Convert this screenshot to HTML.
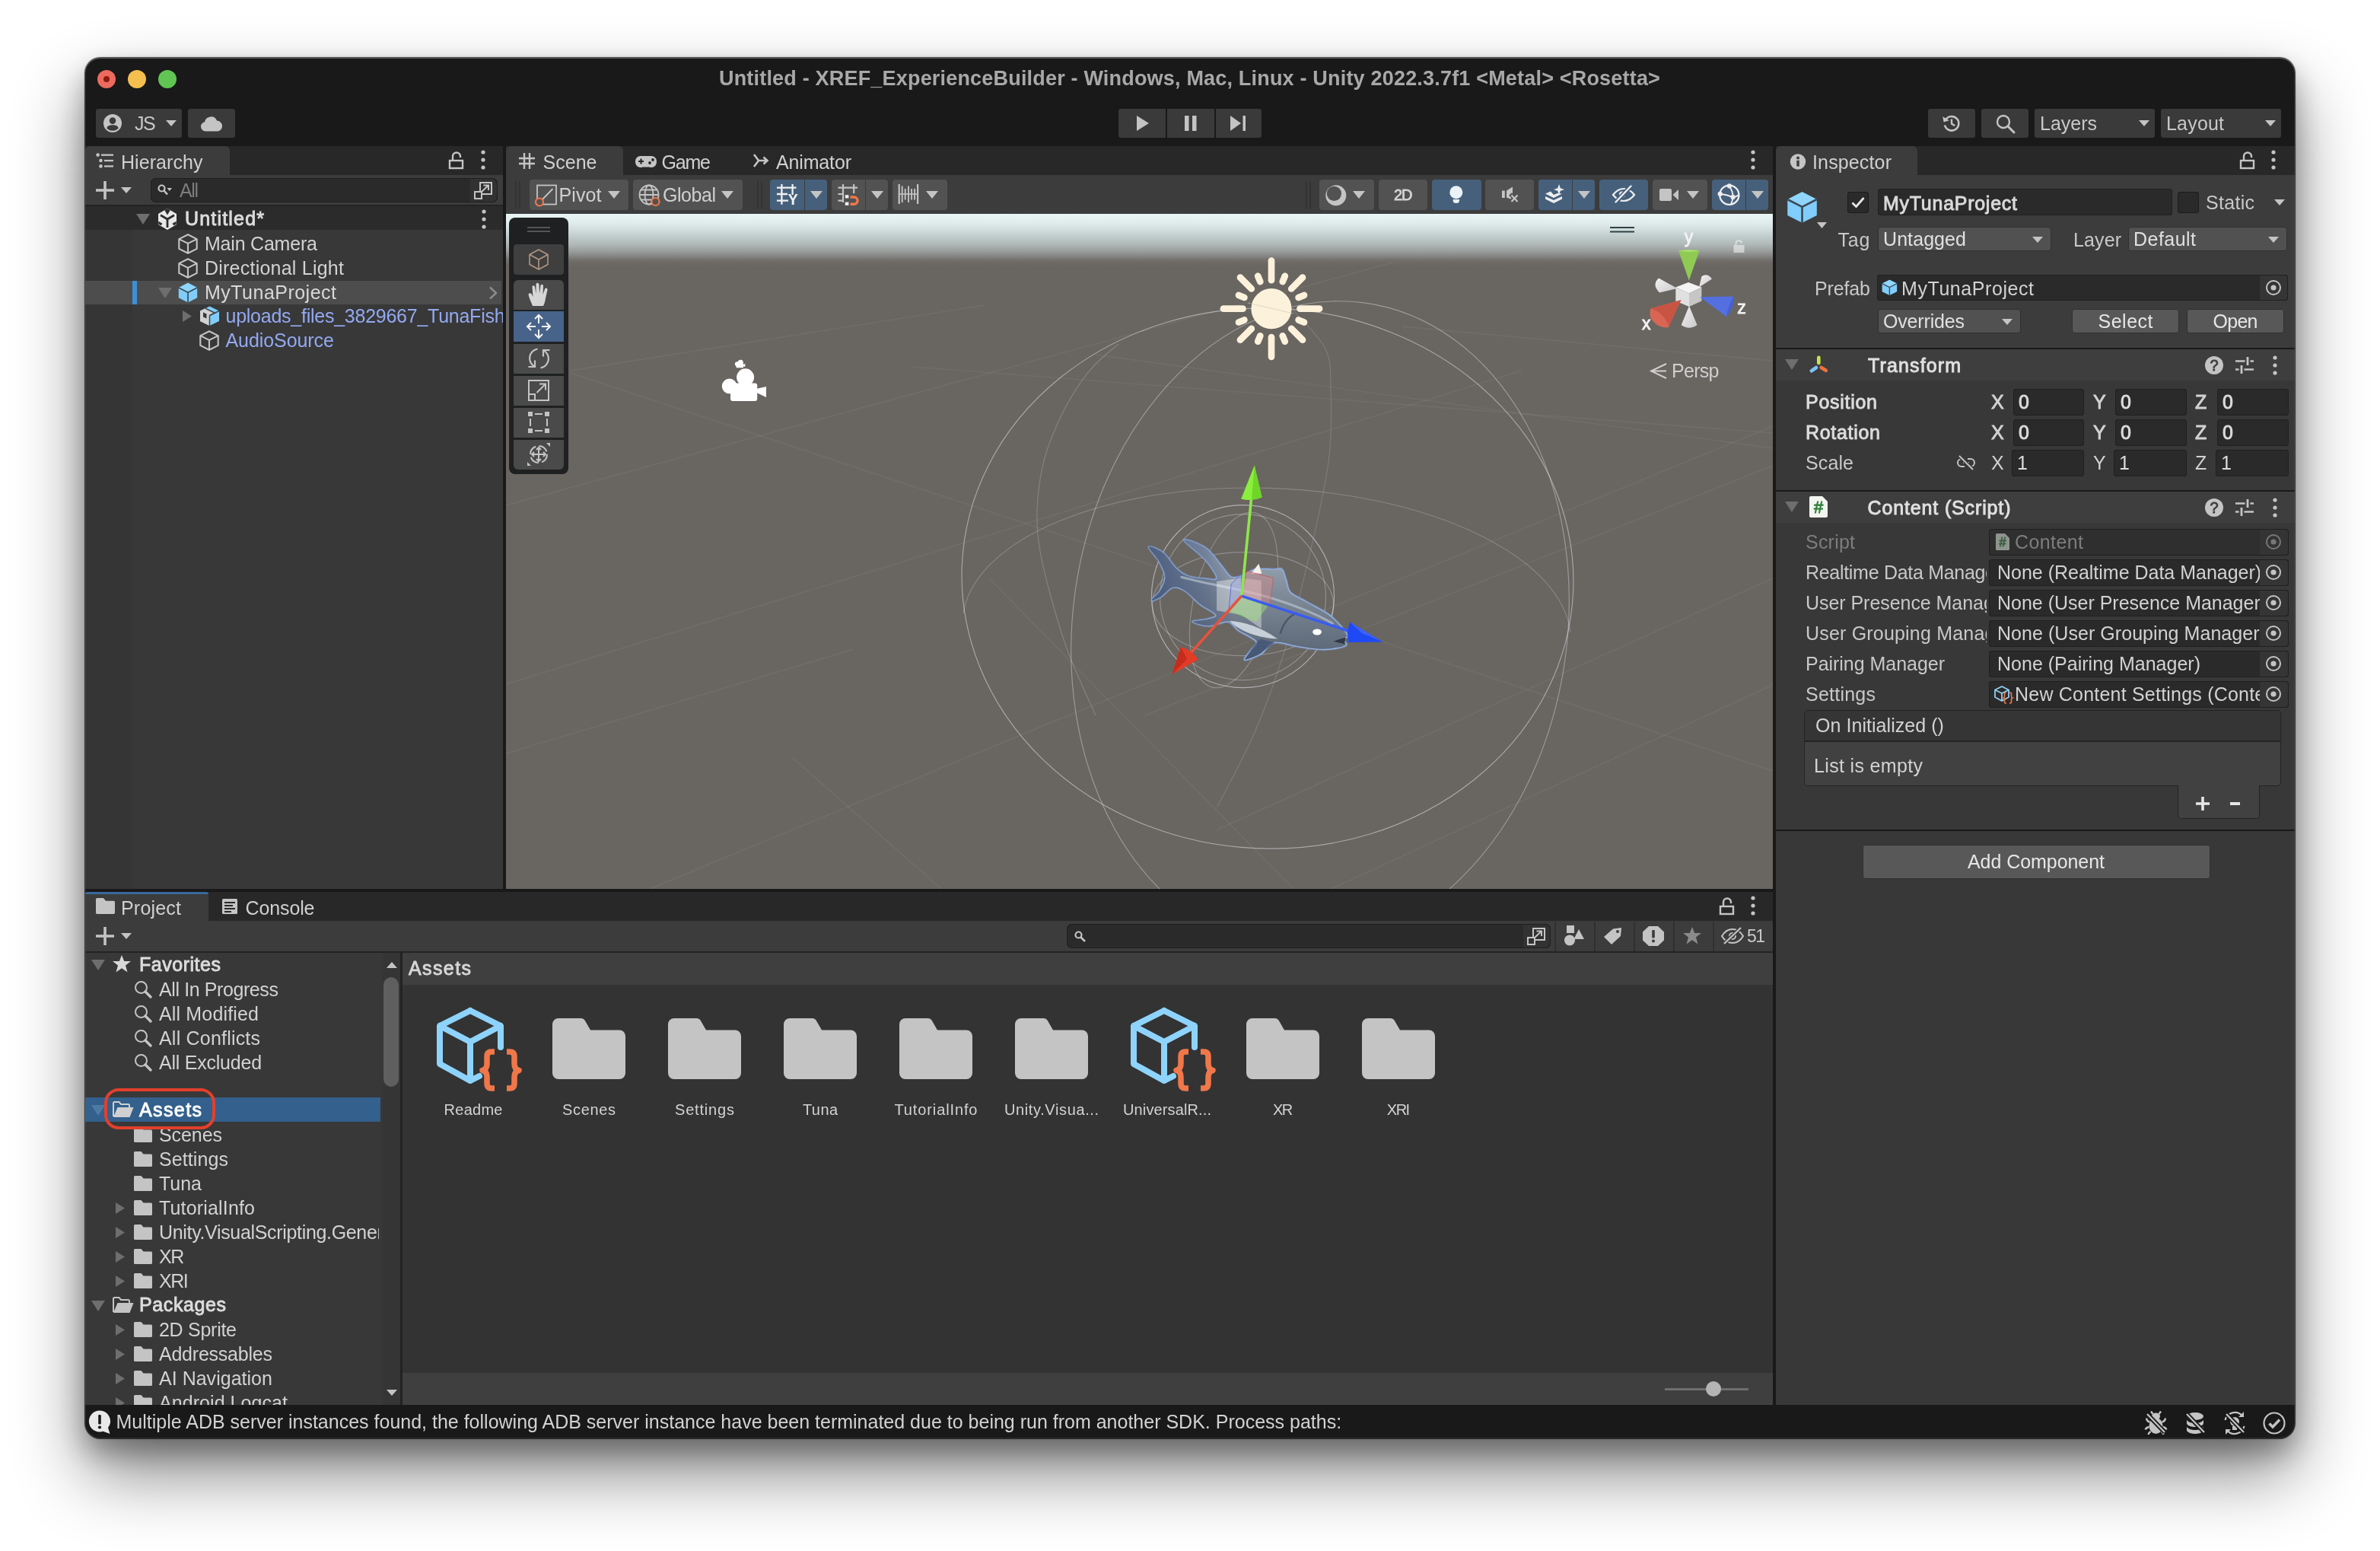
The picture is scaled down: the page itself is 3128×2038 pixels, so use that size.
<!DOCTYPE html>
<html><head><meta charset="utf-8"><title>Unity</title>
<style>
html,body{margin:0;padding:0;background:#fff;}
body{width:3128px;height:2038px;position:relative;overflow:hidden;font-family:"Liberation Sans",sans-serif;}
.a{position:absolute;display:block;box-sizing:border-box;}
.t{white-space:nowrap;}
svg{overflow:visible}
</style></head><body>
<div class="a" style="left:0;top:0;width:3128px;height:2038px;will-change:transform">
<div class="a" style="left:112px;top:76px;width:2904px;height:1814px;border-radius:20px;background:#191919;box-shadow:0 0 0 1px rgba(0,0,0,.6),0 0 3px rgba(0,0,0,.5),0 46px 92px rgba(0,0,0,.48),0 18px 36px rgba(0,0,0,.3);"></div>
<div class="a" style="left:112px;top:76px;width:2904px;height:1814px;border-radius:20px;box-shadow:inset 0 1px 0 rgba(255,255,255,.22), inset 0 0 0 1px rgba(255,255,255,.08);z-index:50;pointer-events:none"></div>
<div class="a" style="left:128px;top:92px;width:24px;height:24px;background:#ec6a5e;border-radius:12px;"></div>
<div class="a" style="left:168px;top:92px;width:24px;height:24px;background:#f4bf4f;border-radius:12px;"></div>
<div class="a" style="left:208px;top:92px;width:24px;height:24px;background:#61c554;border-radius:12px;"></div>
<div class="a" style="left:136px;top:100px;width:8px;height:8px;background:#8c1a10;border-radius:4px;"></div>
<span class="a t" style="left:945.0px;top:86.0px;font-size:27px;line-height:34px;color:#a8a8a8;letter-spacing:0.19px;font-weight:700;">Untitled - XREF_ExperienceBuilder - Windows, Mac, Linux - Unity 2022.3.7f1 &lt;Metal&gt; &lt;Rosetta&gt;</span>
<div class="a" style="left:126px;top:143px;width:113px;height:38px;background:#3a3a3a;border-radius:3px;"></div>
<svg class="a" style="left:136px;top:150px;" width="24" height="24" viewBox="0 0 24 24"><circle cx="12" cy="12" r="12" fill="#c4c4c4"/><circle cx="12" cy="8.6" r="4.3" fill="#3a3a3a"/><path d="M4.2 18.2C5.5 15 8.5 14.2 12 14.2s6.5.8 7.8 4C17.8 20.6 15 21.8 12 21.8S6.2 20.6 4.2 18.2Z" fill="#3a3a3a"/></svg>
<span class="a t" style="left:177.0px;top:146.5px;font-size:25px;line-height:31px;color:#c8c8c8;letter-spacing:-1.50px;">JS</span>
<svg class="a" style="left:217.5px;top:158.0px;" width="14" height="8" viewBox="0 0 14 8"><path d="M0 0H14L7.0 8Z" fill="#c4c4c4"/></svg>
<div class="a" style="left:247px;top:143px;width:62px;height:38px;background:#3a3a3a;border-radius:3px;"></div>
<svg class="a" style="left:263px;top:151px;" width="30" height="22" viewBox="0 0 30 22"><path d="M7 21.5a6.2 6.2 0 0 1-.9-12.3A8.3 8.3 0 0 1 22 7.6 7 7 0 0 1 23.2 21.5Z" fill="#c4c4c4"/></svg>
<div class="a" style="left:1470px;top:143px;width:188px;height:38px;background:#3a3a3a;border-radius:3px;"></div>
<div class="a" style="left:1532px;top:143px;width:2px;height:38px;background:#191919;"></div>
<div class="a" style="left:1596px;top:143px;width:2px;height:38px;background:#191919;"></div>
<svg class="a" style="left:1491px;top:151px;" width="22" height="22" viewBox="0 0 22 22"><path d="M3 1L19 11L3 21Z" fill="#c4c4c4"/></svg>
<svg class="a" style="left:1556px;top:152px;" width="18" height="20" viewBox="0 0 18 20"><rect x="1" y="0" width="5.5" height="20" fill="#c4c4c4"/><rect x="11" y="0" width="5.5" height="20" fill="#c4c4c4"/></svg>
<svg class="a" style="left:1616px;top:152px;" width="24" height="20" viewBox="0 0 24 20"><path d="M1 0L15 10L1 20Z" fill="#c4c4c4"/><rect x="17.5" y="0" width="3.5" height="20" fill="#c4c4c4"/></svg>
<div class="a" style="left:2534px;top:143px;width:62px;height:38px;background:#3a3a3a;border-radius:3px;"></div>
<svg class="a" style="left:2552px;top:149px;" width="26" height="26" viewBox="0 0 26 26"><path d="M5.2 8.2A9.3 9.3 0 1 1 4 15.5" fill="none" stroke="#c4c4c4" stroke-width="2.6"/><path d="M1.2 4.2L2.6 11.6L9.8 9.2Z" fill="#c4c4c4"/><path d="M13 7.5V13.6L17.2 16.2" fill="none" stroke="#c4c4c4" stroke-width="2.4"/></svg>
<div class="a" style="left:2604px;top:143px;width:62px;height:38px;background:#3a3a3a;border-radius:3px;"></div>
<svg class="a" style="left:2622px;top:149px;" width="28" height="28" viewBox="0 0 28 28"><circle cx="11" cy="11" r="8" fill="none" stroke="#c4c4c4" stroke-width="2.4"/><path d="M17 17L25 25" stroke="#c4c4c4" stroke-width="3" stroke-linecap="round"/></svg>
<div class="a" style="left:2674px;top:143px;width:158px;height:38px;background:#3a3a3a;border-radius:3px;"></div>
<span class="a t" style="left:2681.0px;top:146.5px;font-size:25px;line-height:31px;color:#c8c8c8;letter-spacing:-0.01px;">Layers</span>
<svg class="a" style="left:2811.0px;top:158.0px;" width="14" height="8" viewBox="0 0 14 8"><path d="M0 0H14L7.0 8Z" fill="#c4c4c4"/></svg>
<div class="a" style="left:2840px;top:143px;width:158px;height:38px;background:#3a3a3a;border-radius:3px;"></div>
<span class="a t" style="left:2847.0px;top:146.5px;font-size:25px;line-height:31px;color:#c8c8c8;letter-spacing:0.19px;">Layout</span>
<svg class="a" style="left:2977.0px;top:158.0px;" width="14" height="8" viewBox="0 0 14 8"><path d="M0 0H14L7.0 8Z" fill="#c4c4c4"/></svg>
<div class="a" style="left:112px;top:1846px;width:2904px;height:44px;background:#191919;border-radius:0 0 20px 20px;"></div>
<svg class="a" style="left:116px;top:1852px;" width="34" height="34" viewBox="0 0 34 34"><path d="M15 1.5a14 14 0 0 1 11 22.6L28.5 32 19.5 28.7A14 14 0 1 1 15 1.5Z" fill="#e8e8e8"/><rect x="13.2" y="7" width="3.6" height="12.5" rx="1.2" fill="#191919"/><circle cx="15" cy="23.5" r="2.1" fill="#191919"/></svg>
<span class="a t" style="left:152.5px;top:1853.0px;font-size:25px;line-height:31px;color:#d2d2d2;letter-spacing:0.00px;">Multiple ADB server instances found, the following ADB server instance have been terminated due to being run from another SDK. Process paths:</span>
<svg class="a" style="left:2816px;top:1853px;" width="34" height="34" viewBox="0 0 34 34"><ellipse cx="17.500" cy="20.500" rx="9" ry="10.500" fill="#c4c4c4"/><ellipse cx="17.500" cy="8" rx="5.500" ry="4.500" fill="#c4c4c4"/><path d="M9.500 15.500Q5.500 14.500 5 10.500M25.500 15.500Q29.500 14.500 30 10.500M8.500 22Q5 22.500 3.500 25.500M26.500 22Q30 22.500 31.500 25.500M10.500 28Q8 29.500 7.500 32M24.500 28Q27 29.500 27.500 32M13.500 5L11 1.500M21.500 5L24 1.500" stroke="#c4c4c4" stroke-width="2.400" fill="none"/><path d="M6 5L29 29" stroke="#191919" stroke-width="6"/><path d="M6 5L29 29" stroke="#c4c4c4" stroke-width="2.2"/></svg>
<svg class="a" style="left:2868px;top:1853px;" width="34" height="34" viewBox="0 0 34 34"><ellipse cx="17" cy="8" rx="11" ry="5" fill="#c4c4c4"/><path d="M6 12c0 2.8 4.9 5 11 5s11-2.2 11-5v5c0 2.8-4.9 5-11 5S6 19.800 6 17Z" fill="#c4c4c4"/><path d="M6 21c0 2.800 4.900 5 11 5s11-2.200 11-5v5c0 2.800-4.900 5-11 5S6 28.800 6 26Z" fill="#c4c4c4"/><path d="M6 5L29 29" stroke="#191919" stroke-width="6"/><path d="M6 5L29 29" stroke="#c4c4c4" stroke-width="2.2"/></svg>
<svg class="a" style="left:2920px;top:1853px;" width="34" height="34" viewBox="0 0 34 34"><path d="M4.500 13A13 13 0 0 1 27 7.500M29.500 21A13 13 0 0 1 7 26.500" fill="none" stroke="#c4c4c4" stroke-width="2.2"/><path d="M29 2V9H22ZM5 32V25H12Z" fill="#c4c4c4"/><circle cx="17" cy="15" r="6" fill="#c4c4c4"/><rect x="14" y="21" width="6" height="5" fill="#c4c4c4"/><path d="M6 5L29 29" stroke="#191919" stroke-width="6"/><path d="M6 5L29 29" stroke="#c4c4c4" stroke-width="2.2"/></svg>
<svg class="a" style="left:2972px;top:1853px;" width="34" height="34" viewBox="0 0 34 34"><circle cx="17" cy="17" r="13.500" fill="none" stroke="#c4c4c4" stroke-width="2.2"/><path d="M10.500 17.500L15 22L24 12.500" fill="none" stroke="#c4c4c4" stroke-width="3.4"/></svg>
<div class="a" style="left:112px;top:192px;width:549px;height:976px;background:#383838;"></div>
<div class="a" style="left:112px;top:192px;width:549px;height:38px;background:#282828;"></div>
<div class="a" style="left:112px;top:192px;width:190px;height:39px;background:#3c3c3c;border-radius:6px 6px 0 0;"></div>
<svg class="a" style="left:126px;top:201px;" width="24" height="20" viewBox="0 0 24 20"><circle cx="2.600" cy="2.600" r="2.300" fill="#c4c4c4"/><circle cx="6.500" cy="10" r="2.300" fill="#c4c4c4"/><circle cx="6.500" cy="17.400" r="2.300" fill="#c4c4c4"/><rect x="7" y="1.500" width="16" height="2.300" fill="#c4c4c4"/><rect x="11" y="8.900" width="12" height="2.300" fill="#c4c4c4"/><rect x="11" y="16.300" width="12" height="2.300" fill="#c4c4c4"/></svg>
<span class="a t" style="left:159.0px;top:197.5px;font-size:25px;line-height:31px;color:#d0d0d0;letter-spacing:0.06px;">Hierarchy</span>
<svg class="a" style="left:589px;top:197px;" width="22" height="26" viewBox="0 0 22 26"><rect x="2" y="14" width="17" height="10" fill="none" stroke="#c4c4c4" stroke-width="2.4"/><path d="M6 14V8.5a5 5 0 0 1 10 0V10" fill="none" stroke="#c4c4c4" stroke-width="2.4"/></svg>
<svg class="a" style="left:631px;top:196px;" width="8" height="28" viewBox="0 0 8 28"><circle cx="4" cy="4" r="2.6" fill="#c4c4c4"/><circle cx="4" cy="14" r="2.6" fill="#c4c4c4"/><circle cx="4" cy="24" r="2.6" fill="#c4c4c4"/></svg>
<div class="a" style="left:112px;top:230px;width:549px;height:40px;background:#3c3c3c;"></div>
<div class="a" style="left:112px;top:269px;width:549px;height:2px;background:#232323;"></div>
<svg class="a" style="left:126px;top:238px;" width="24" height="24" viewBox="0 0 24 24"><path d="M12 0V24M0 12H24" stroke="#c4c4c4" stroke-width="3.600"/></svg>
<svg class="a" style="left:159.0px;top:246.0px;" width="14" height="8" viewBox="0 0 14 8"><path d="M0 0H14L7.0 8Z" fill="#c4c4c4"/></svg>
<div class="a" style="left:198px;top:234px;width:456px;height:32px;background:#2a2a2a;border-radius:7px;box-shadow:inset 0 0 0 1px #1f1f1f;"></div>
<svg class="a" style="left:207px;top:242px;" width="20" height="18" viewBox="0 0 20 18"><circle cx="5.500" cy="5.500" r="4" fill="none" stroke="#c4c4c4" stroke-width="2.200"/><path d="M8.500 8.500L13 13.500" stroke="#c4c4c4" stroke-width="2.600"/><path d="M12.500 5H19L15.750 9Z" fill="#c4c4c4"/></svg>
<span class="a t" style="left:236.0px;top:234.5px;font-size:25px;line-height:31px;color:#7c7c7c;letter-spacing:-1.40px;">All</span>
<div class="a" style="left:618px;top:235px;width:35px;height:30px;background:#323232;border-radius:0 7px 7px 0;"></div>
<svg class="a" style="left:623px;top:238px;" width="26" height="24" viewBox="0 0 26 24"><path d="M8 2H23V17H8Z" fill="none" stroke="#c4c4c4" stroke-width="2"/><path d="M1 14H10V23H1Z" fill="#323232" stroke="#c4c4c4" stroke-width="2"/><path d="M10 14L19 5.500M12.500 5.500H19V12" fill="none" stroke="#c4c4c4" stroke-width="2"/></svg>
<div class="a" style="left:112px;top:302px;width:62px;height:866px;background:#353535;"></div>
<div class="a" style="left:112px;top:271px;width:549px;height:31px;background:#2b2b2b;"></div>
<svg class="a" style="left:179.0px;top:281.0px;" width="18" height="14" viewBox="0 0 18 14"><path d="M0 0H18L9.0 14Z" fill="#6e6e6e"/></svg>
<svg class="a" style="left:207px;top:274px;" width="26" height="28" viewBox="0 0 26 28"><path d="M13 0L25 7V21L13 28L1 21V7Z" fill="#e8e8e8"/><path d="M13 14V25M13 14L4 8.800M13 14L22 8.800" stroke="#2b2b2b" stroke-width="2.800"/><path d="M9.300 2.200L13 8.500L16.700 2.200L13 0Z" fill="#2b2b2b"/><path d="M1.300 16.800L6.500 19.800L4.600 22.300L1.300 20.500ZM24.700 16.800L19.500 19.800L21.400 22.300L24.700 20.500Z" fill="#2b2b2b"/></svg>
<span class="a t" style="left:243.0px;top:271.5px;font-size:25px;line-height:31px;color:#dcdcdc;letter-spacing:1.19px;-webkit-text-stroke:0.9px #dcdcdc;">Untitled*</span>
<svg class="a" style="left:632px;top:274px;" width="8" height="28" viewBox="0 0 8 28"><circle cx="4" cy="4" r="2.6" fill="#c4c4c4"/><circle cx="4" cy="14" r="2.6" fill="#c4c4c4"/><circle cx="4" cy="24" r="2.6" fill="#c4c4c4"/></svg>
<svg class="a" style="left:234px;top:306.5px;" width="26" height="27" viewBox="0 0 26 27"><path d="M13 1.300L24.700 7.100V19.900L13 25.700L1.300 19.900V7.100Z M1.300 7.100L13 12.900L24.700 7.100M13 12.900V25.700" fill="none" stroke="#c4c4c4" stroke-width="2.1" stroke-linejoin="round"/></svg>
<span class="a t" style="left:269.0px;top:304.5px;font-size:25px;line-height:31px;color:#d2d2d2;letter-spacing:-0.21px;">Main Camera</span>
<svg class="a" style="left:234px;top:338.5px;" width="26" height="27" viewBox="0 0 26 27"><path d="M13 1.300L24.700 7.100V19.900L13 25.700L1.300 19.900V7.100Z M1.300 7.100L13 12.900L24.700 7.100M13 12.900V25.700" fill="none" stroke="#c4c4c4" stroke-width="2.1" stroke-linejoin="round"/></svg>
<span class="a t" style="left:269.0px;top:336.5px;font-size:25px;line-height:31px;color:#d2d2d2;letter-spacing:0.23px;">Directional Light</span>
<div class="a" style="left:112px;top:369px;width:547px;height:31px;background:#4d4d4d;"></div>
<div class="a" style="left:174px;top:369px;width:6px;height:31px;background:#3d8fd6;"></div>
<svg class="a" style="left:208.0px;top:378.0px;" width="18" height="14" viewBox="0 0 18 14"><path d="M0 0H18L9.0 14Z" fill="#6e6e6e"/></svg>
<svg class="a" style="left:234px;top:370.5px;" width="26.0" height="27.0" viewBox="0 0 26 27"><path d="M13 .800L25.200 7V20.200L13 26.400L.800 20.200V7Z" fill="#80cdfb"/><path d="M13 .800L25.200 7L13 13.200L.800 7Z" fill="#8fd5fd"/><path d="M.800 7L13 13.200L25.200 7M13 13.200V26.400" fill="none" stroke="#3d4a55" stroke-width="1.700"/></svg>
<span class="a t" style="left:269.0px;top:368.5px;font-size:25px;line-height:31px;color:#d8d8d8;letter-spacing:0.48px;">MyTunaProject</span>
<svg class="a" style="left:642px;top:376px;" width="12" height="18" viewBox="0 0 12 18"><path d="M2 1.500L10 9L2 16.500" fill="none" stroke="#8c8c8c" stroke-width="2.400"/></svg>
<svg class="a" style="left:239.5px;top:407.5px;" width="12" height="15" viewBox="0 0 12 15"><path d="M0 0L12 7.5L0 15Z" fill="#6e6e6e"/></svg>
<svg class="a" style="left:262px;top:401px;" width="27" height="28" viewBox="0 0 27 28"><path d="M13.500 1.500L26 7.500V21L13.500 27L1 21V7.500Z" fill="#80cdfb"/><path d="M1 7.500L13.500 13.500V27L1 21Z" fill="#d2d2d2"/><path d="M1 7.500L8 4.200L20.500 10.200L13.500 13.500Z" fill="#d2d2d2"/><path d="M5 9.500V15.500L9.500 17.600V11.600Z" fill="#383838"/><path d="M8 4.200L20.500 10.200L13.500 13.500" fill="none" stroke="#3d4a55" stroke-width="1.600"/><path d="M13.500 13.500V27M13.500 13.500L26 7.500" fill="none" stroke="#3d4a55" stroke-width="1.600"/></svg>
<span class="a t" style="left:296.5px;top:399.5px;font-size:25px;line-height:31px;color:#93a9f1;letter-spacing:-0.25px;width:364.5px;overflow:hidden;">uploads_files_3829667_TunaFish</span>
<svg class="a" style="left:262px;top:433.5px;" width="26" height="27" viewBox="0 0 26 27"><path d="M13 1.300L24.700 7.100V19.900L13 25.700L1.300 19.900V7.100Z M1.300 7.100L13 12.900L24.700 7.100M13 12.900V25.700" fill="none" stroke="#c4c4c4" stroke-width="2.1" stroke-linejoin="round"/></svg>
<span class="a t" style="left:296.5px;top:431.5px;font-size:25px;line-height:31px;color:#93a9f1;letter-spacing:-0.07px;">AudioSource</span>
<div class="a" style="left:665px;top:192px;width:1665px;height:38px;background:#282828;"></div>
<div class="a" style="left:665px;top:192px;width:154px;height:39px;background:#3c3c3c;border-radius:6px 6px 0 0;"></div>
<div class="a" style="left:665px;top:230px;width:1665px;height:51px;background:#3c3c3c;"></div>
<svg class="a" style="left:682px;top:201px;" width="21" height="21" viewBox="0 0 21 21"><path d="M7 0V21M14 0V21M0 7H21M0 14H21" stroke="#c4c4c4" stroke-width="2.400"/></svg>
<span class="a t" style="left:713.5px;top:197.5px;font-size:25px;line-height:31px;color:#d0d0d0;letter-spacing:0.03px;">Scene</span>
<svg class="a" style="left:835px;top:204px;" width="28" height="18" viewBox="0 0 28 18"><path d="M6.500 1H21.500A7 7 0 0 1 28 9.500 7 7 0 0 1 18.500 15.500H9.500A7 7 0 0 1 0 9.500 7 7 0 0 1 6.500 1Z" fill="#c4c4c4"/><path d="M7.500 4.500V11.500M4 8H11" stroke="#282828" stroke-width="2.200"/><circle cx="19" cy="10" r="1.900" fill="#282828"/><circle cx="23" cy="6" r="1.900" fill="#282828"/></svg>
<span class="a t" style="left:869.5px;top:197.5px;font-size:25px;line-height:31px;color:#d0d0d0;letter-spacing:-1.20px;">Game</span>
<svg class="a" style="left:989px;top:201px;" width="22" height="20" viewBox="0 0 22 20"><path d="M2 2L8 10L2 18" fill="none" stroke="#c4c4c4" stroke-width="2.600"/><path d="M8 10H19M14.500 5.500L19.500 10L14.500 14.500" fill="none" stroke="#c4c4c4" stroke-width="2.600"/></svg>
<span class="a t" style="left:1020.0px;top:197.5px;font-size:25px;line-height:31px;color:#d0d0d0;letter-spacing:-0.15px;">Animator</span>
<svg class="a" style="left:2300px;top:196px;" width="8" height="28" viewBox="0 0 8 28"><circle cx="4" cy="4" r="2.6" fill="#c4c4c4"/><circle cx="4" cy="14" r="2.6" fill="#c4c4c4"/><circle cx="4" cy="24" r="2.6" fill="#c4c4c4"/></svg>
<div class="a" style="left:677px;top:238px;width:1.5px;height:36px;background:#333333;"></div>
<div class="a" style="left:682px;top:238px;width:1.5px;height:36px;background:#333333;"></div>
<div class="a" style="left:696px;top:236px;width:130px;height:40px;background:#525252;border-radius:4px;"></div>
<svg class="a" style="left:703px;top:242px;" width="30" height="30" viewBox="0 0 30 30"><rect x="3" y="1.500" width="25" height="25" fill="none" stroke="#c4c4c4" stroke-width="1.800"/><path d="M8 22L23.500 6" stroke="#c4c4c4" stroke-width="1.800"/><circle cx="6" cy="23.500" r="5" fill="#525252" stroke="#f0764a" stroke-width="2.200"/></svg>
<span class="a t" style="left:734.5px;top:240.5px;font-size:25px;line-height:31px;color:#d0d0d0;letter-spacing:0.10px;">Pivot</span>
<svg class="a" style="left:799.0px;top:250.5px;" width="16" height="10" viewBox="0 0 16 10"><path d="M0 0H16L8.0 10Z" fill="#c4c4c4"/></svg>
<div class="a" style="left:832px;top:236px;width:144px;height:40px;background:#525252;border-radius:4px;"></div>
<svg class="a" style="left:839px;top:242px;" width="30" height="30" viewBox="0 0 30 30"><circle cx="14" cy="14" r="12.500" fill="none" stroke="#c4c4c4" stroke-width="1.800"/><ellipse cx="14" cy="14" rx="5.500" ry="12.500" fill="none" stroke="#c4c4c4" stroke-width="1.800"/><path d="M1.500 14H26.500M3.500 7.500H24.500M3.500 20.500H24.500" stroke="#c4c4c4" stroke-width="1.800"/><circle cx="22.500" cy="23" r="5" fill="#525252" stroke="#f0764a" stroke-width="2.200"/></svg>
<span class="a t" style="left:871.0px;top:240.5px;font-size:25px;line-height:31px;color:#d0d0d0;letter-spacing:-0.45px;">Global</span>
<svg class="a" style="left:948.0px;top:250.5px;" width="16" height="10" viewBox="0 0 16 10"><path d="M0 0H16L8.0 10Z" fill="#c4c4c4"/></svg>
<div class="a" style="left:995px;top:238px;width:1.5px;height:36px;background:#333333;"></div>
<div class="a" style="left:1000px;top:238px;width:1.5px;height:36px;background:#333333;"></div>
<div class="a" style="left:1012px;top:236px;width:45px;height:40px;background:#46607c;border-radius:4px 0 0 4px;"></div>
<div class="a" style="left:1058px;top:236px;width:29px;height:40px;background:#46607c;border-radius:0 4px 4px 0;"></div>
<svg class="a" style="left:1012px;top:236px;" width="76" height="40" viewBox="1012 236 76 40"><path d="M1027.400 242V268.700M1041.600 242V256M1021 246.600H1046.500M1021 255H1035M1021 263.600H1036" stroke="#f0f0f0" stroke-width="2.300"/></svg>
<span class="a t" style="left:1035.6px;top:250.0px;font-size:20px;line-height:25px;color:#f0f0f0;font-weight:700;">Y</span>
<svg class="a" style="left:1064.8px;top:250.5px;" width="16" height="10" viewBox="0 0 16 10"><path d="M0 0H16L8.0 10Z" fill="#c4c4c4"/></svg>
<div class="a" style="left:1093px;top:236px;width:44px;height:40px;background:#525252;border-radius:4px 0 0 4px;"></div>
<div class="a" style="left:1138px;top:236px;width:29px;height:40px;background:#525252;border-radius:0 4px 4px 0;"></div>
<svg class="a" style="left:1093px;top:236px;" width="76" height="40" viewBox="1093 236 76 40"><path d="M1108 242V266M1122.200 242V254M1101.500 246.600H1127M1101.500 255H1108M1101.500 263.600H1108" stroke="#c4c4c4" stroke-width="2.200"/><rect x="1110.800" y="256.200" width="4.600" height="4.200" fill="#f0f0f0"/><rect x="1110.800" y="265.600" width="4.600" height="4.200" fill="#f0f0f0"/><path d="M1117.500 259H1122.500A4.600 4.600 0 0 1 1122.500 268.200H1117.500" fill="none" stroke="#f0764a" stroke-width="3.400"/></svg>
<svg class="a" style="left:1145.4px;top:250.5px;" width="16" height="10" viewBox="0 0 16 10"><path d="M0 0H16L8.0 10Z" fill="#c4c4c4"/></svg>
<div class="a" style="left:1173px;top:236px;width:72px;height:40px;background:#525252;border-radius:4px;"></div>
<svg class="a" style="left:1173px;top:236px;" width="76" height="40" viewBox="1173 236 76 40"><path d="M1181.700 242V268M1206.100 242V268" stroke="#c4c4c4" stroke-width="2.200"/><path d="M1185.700 244.500V266M1189.700 248V262.500M1194 244.500V266M1198.100 248V262.500M1202.100 248V262.500" stroke="#c4c4c4" stroke-width="1.900"/><path d="M1181.700 255H1206.100" stroke="#c4c4c4" stroke-width="1.600"/></svg>
<svg class="a" style="left:1216.8px;top:250.5px;" width="16" height="10" viewBox="0 0 16 10"><path d="M0 0H16L8.0 10Z" fill="#c4c4c4"/></svg>
<div class="a" style="left:1716px;top:238px;width:1.5px;height:36px;background:#333333;"></div>
<div class="a" style="left:1721px;top:238px;width:1.5px;height:36px;background:#333333;"></div>
<div class="a" style="left:1734px;top:236px;width:72px;height:40px;background:#525252;border-radius:4px;"></div>
<svg class="a" style="left:1734px;top:236px;" width="72" height="40" viewBox="1734 236 72 40"><circle cx="1755.800" cy="256.800" r="13.500" fill="#c4c4c4"/><circle cx="1753.400" cy="254.400" r="9.600" fill="#525252"/></svg>
<svg class="a" style="left:1778.0px;top:250.5px;" width="16" height="10" viewBox="0 0 16 10"><path d="M0 0H16L8.0 10Z" fill="#c4c4c4"/></svg>
<div class="a" style="left:1812px;top:236px;width:64px;height:40px;background:#525252;border-radius:4px;"></div>
<span class="a t" style="left:1832.0px;top:244.0px;font-size:20px;line-height:25px;color:#d0d0d0;letter-spacing:-1.08px;-webkit-text-stroke:0.9px #d0d0d0;">2D</span>
<div class="a" style="left:1882px;top:236px;width:65px;height:40px;background:#46607c;border-radius:4px;"></div>
<svg class="a" style="left:1882px;top:236px;" width="65" height="40" viewBox="1882 236 65 40"><circle cx="1913.800" cy="252.700" r="8.500" fill="#eaf1f8"/><path d="M1909.700 262H1918V263.500A4.150 3.600 0 0 1 1909.700 263.500Z" fill="#eaf1f8"/></svg>
<div class="a" style="left:1952px;top:236px;width:64px;height:40px;background:#525252;border-radius:4px;"></div>
<svg class="a" style="left:1952px;top:236px;" width="64" height="40" viewBox="1952 236 64 40"><rect x="1974" y="250.500" width="3.800" height="9.500" fill="#c4c4c4"/><path d="M1980 250.500L1988 245.500V262.500L1980 259.500Z" fill="#c4c4c4"/><path d="M1985 255L1995 265.500M1995 255L1985 265.500" stroke="#525252" stroke-width="5"/><path d="M1986.500 256.500L1994.500 265M1994.500 256.500L1986.500 265" stroke="#c4c4c4" stroke-width="2.200"/></svg>
<div class="a" style="left:2022px;top:236px;width:44px;height:40px;background:#46607c;border-radius:4px 0 0 4px;"></div>
<div class="a" style="left:2067px;top:236px;width:29px;height:40px;background:#46607c;border-radius:0 4px 4px 0;"></div>
<svg class="a" style="left:2030px;top:242px;" width="30" height="28" viewBox="0 0 30 28"><path d="M1 16L12 21L23 16L23 19.500L12 25L1 19.500Z" fill="#eeeeee"/><path d="M1 12.500L8 9.500L12 14L17 12L23 12.500L12 18Z" fill="#eeeeee"/><path d="M19 0L20.800 5.200L26 7L20.800 8.800L19 14L17.200 8.800L12 7L17.200 5.200Z" fill="#eeeeee"/></svg>
<svg class="a" style="left:2073.5px;top:250.5px;" width="16" height="10" viewBox="0 0 16 10"><path d="M0 0H16L8.0 10Z" fill="#c4c4c4"/></svg>
<div class="a" style="left:2102px;top:236px;width:64px;height:40px;background:#46607c;border-radius:4px;"></div>
<svg class="a" style="left:2102px;top:236px;" width="64" height="40" viewBox="2102 236 64 40"><path d="M2120 256C2125 249.500 2129.500 248 2134 248S2143 249.500 2148 256C2143 262.500 2138.500 264 2134 264S2125 262.500 2120 256Z" fill="none" stroke="#eeeeee" stroke-width="2.200"/><circle cx="2132" cy="255.500" r="4" fill="#eeeeee"/><path d="M2123 266.500L2144 244" stroke="#46607c" stroke-width="6"/><path d="M2123.500 265.500L2143.500 244.500" stroke="#eeeeee" stroke-width="2.400" stroke-linecap="round"/></svg>
<div class="a" style="left:2172px;top:236px;width:72px;height:40px;background:#525252;border-radius:4px;"></div>
<svg class="a" style="left:2181px;top:247px;" width="26" height="18" viewBox="0 0 26 18"><rect x="0" y="1" width="16" height="16" rx="2" fill="#c4c4c4"/><path d="M17.500 9L25 2V16Z" fill="#c4c4c4"/></svg>
<svg class="a" style="left:2216.5px;top:250.5px;" width="16" height="10" viewBox="0 0 16 10"><path d="M0 0H16L8.0 10Z" fill="#c4c4c4"/></svg>
<div class="a" style="left:2250px;top:236px;width:44px;height:40px;background:#46607c;border-radius:4px 0 0 4px;"></div>
<div class="a" style="left:2295px;top:236px;width:29px;height:40px;background:#46607c;border-radius:0 4px 4px 0;"></div>
<svg class="a" style="left:2250px;top:236px;" width="44" height="40" viewBox="2250 236 44 40"><circle cx="2272.800" cy="256.200" r="12.600" fill="none" stroke="#eeeeee" stroke-width="2.300"/><path d="M2272.800 244.500Q2277.500 251 2277.600 259M2260.500 254.800Q2269 255.500 2277.600 259M2277.600 259Q2277 264.500 2274.800 268.800M2277.600 259Q2282 258.500 2285.200 256.200" fill="none" stroke="#eeeeee" stroke-width="2"/><circle cx="2272.800" cy="244.300" r="3.100" fill="#eeeeee"/><circle cx="2260.700" cy="254.800" r="3.100" fill="#eeeeee"/><circle cx="2277.600" cy="259" r="3.100" fill="#eeeeee"/></svg>
<svg class="a" style="left:2301.5px;top:250.5px;" width="16" height="10" viewBox="0 0 16 10"><path d="M0 0H16L8.0 10Z" fill="#c4c4c4"/></svg>
<div class="a" style="left:665px;top:281px;width:1665px;height:887px;overflow:hidden;background:#696561;">
<div class="a" style="left:0;top:0;width:1665px;height:70px;background:linear-gradient(#eaf6f6 0px,#e0ecec 12px,#d0dbdb 22px,#c0cccb 30px,#b0b9b8 40px,#9a9e9c 49px,#878886 55px,#75726e 60px,#6c6864 65px,#696561 70px);"></div>
<svg class="a" style="left:0;top:0" width="1665" height="887" viewBox="665 281 1665 887"><defs><linearGradient id="fb" x1="0" y1="0" x2="0" y2="1"><stop offset="0" stop-color="#a4afbd"/><stop offset=".45" stop-color="#808b99"/><stop offset="1" stop-color="#586373"/></linearGradient><linearGradient id="ft" x1="0" y1="0" x2="1" y2="0"><stop offset="0" stop-color="#3f5176" stop-opacity=".85"/><stop offset=".28" stop-color="#3f5176" stop-opacity=".45"/><stop offset=".43" stop-color="#3f5176" stop-opacity="0"/></linearGradient></defs><path d="M665 664L1830 345" stroke="#ffffff" stroke-opacity=".06" stroke-width="1.400"/><path d="M750 490L2330 1013" stroke="#ffffff" stroke-opacity=".06" stroke-width="1.400"/><path d="M750 487L1294 401" stroke="#ffffff" stroke-opacity=".06" stroke-width="1.400"/><path d="M665 899L2000 487" stroke="#ffffff" stroke-opacity=".06" stroke-width="1.400"/><path d="M665 990L1122 853" stroke="#ffffff" stroke-opacity=".06" stroke-width="1.400"/><path d="M854 1168L1380 950" stroke="#ffffff" stroke-opacity=".06" stroke-width="1.400"/><path d="M1042 996L1237 1168" stroke="#ffffff" stroke-opacity=".06" stroke-width="1.400"/><path d="M1440 466L2330 589" stroke="#ffffff" stroke-opacity=".06" stroke-width="1.400"/><path d="M1843 429L2330 474" stroke="#ffffff" stroke-opacity=".06" stroke-width="1.400"/><path d="M1200 482L2330 569" stroke="#ffffff" stroke-opacity=".06" stroke-width="1.400"/><path d="M2330 612L1505 940" stroke="#ffffff" stroke-opacity=".06" stroke-width="1.400"/><path d="M2330 760L1600 1090" stroke="#ffffff" stroke-opacity=".06" stroke-width="1.400"/><path d="M1380 950L2330 560" stroke="#ffffff" stroke-opacity=".06" stroke-width="1.400"/><path d="M1750 1168L2330 900" stroke="#ffffff" stroke-opacity=".06" stroke-width="1.400"/><path d="M1300 760L1700 1168" stroke="#ffffff" stroke-opacity=".06" stroke-width="1.400"/><ellipse cx="1666" cy="760" rx="402" ry="355" transform="rotate(2.500 1666 760)" fill="none" stroke="#e9edf2" stroke-width="1.150" stroke-opacity=".5"/><path d="M1266 806A400 189 2 0 1 2064 831" fill="none" stroke="#e9edf2" stroke-width="1.150" stroke-opacity=".24"/><ellipse cx="1735" cy="822" rx="428" ry="325" transform="rotate(-82 1735 822)" fill="none" stroke="#e9edf2" stroke-width="1.150" stroke-opacity=".4"/><path d="M1470.0 452.0C1463.8 457.6 1444.9 471.4 1433.0 485.8C1421.1 500.2 1408.7 518.8 1398.6 538.6C1388.5 558.4 1378.1 582.7 1372.2 604.7C1366.3 626.8 1363.9 651.1 1363.0 670.9C1362.1 690.7 1363.6 703.9 1366.9 723.7C1370.2 743.6 1376.5 767.3 1382.8 790.0C1389.1 812.7 1395.5 835.0 1405.0 860.0C1414.5 885.0 1434.2 926.7 1440.0 940.0" fill="none" stroke="#e9edf2" stroke-width="1.150" stroke-opacity=".22"/><path d="M1700.0 408.0C1707.1 416.6 1734.2 441.9 1742.4 459.3C1750.6 476.7 1748.1 490.2 1749.0 512.2C1749.9 534.2 1749.7 567.3 1747.7 591.5C1745.7 615.7 1742.3 631.1 1737.0 657.6C1731.7 684.1 1723.8 718.1 1716.0 750.2C1708.2 782.3 1701.0 815.0 1690.0 850.0C1679.0 885.0 1665.0 925.0 1650.0 960.0C1635.0 995.0 1608.3 1043.3 1600.0 1060.0" fill="none" stroke="#e9edf2" stroke-width="1.150" stroke-opacity=".17"/><circle cx="1633.5" cy="783.6" r="120" fill="none" stroke="#e9edf2" stroke-width="1.150" stroke-opacity=".55"/><circle cx="1633.5" cy="784.6" r="109" fill="none" stroke="#e9edf2" stroke-width="1.150" stroke-opacity=".32"/><ellipse cx="1633.5" cy="793.6" rx="119" ry="68" fill="none" stroke="#e9edf2" stroke-width="1.150" stroke-opacity=".3"/><ellipse cx="1621.5" cy="788.6" rx="52" ry="118" transform="rotate(14 1621.5 788.6)" fill="none" stroke="#e9edf2" stroke-width="1.150" stroke-opacity=".3"/><g transform="translate(1440 580) scale(0.22563)"><path d="M310.0 615.0C314.2 606.7 368.3 629.2 395.0 650.0C421.7 670.8 445.8 717.5 470.0 740.0C494.2 762.5 511.7 775.0 540.0 785.0C568.3 795.0 612.5 798.3 640.0 800.0C667.5 801.7 705.0 813.3 705.0 795.0C705.0 776.7 671.7 726.7 640.0 690.0C608.3 653.3 515.0 586.7 515.0 575.0C515.0 563.3 604.2 595.8 640.0 620.0C675.8 644.2 705.0 691.7 730.0 720.0C755.0 748.3 768.3 780.0 790.0 790.0C811.7 800.0 836.7 787.5 860.0 780.0C883.3 772.5 900.0 750.8 930.0 745.0C960.0 739.2 1014.2 745.0 1040.0 745.0C1065.8 745.0 1073.3 734.2 1085.0 745.0C1096.7 755.8 1101.7 787.5 1110.0 810.0C1118.3 832.5 1115.0 859.2 1135.0 880.0C1155.0 900.8 1192.5 913.3 1230.0 935.0C1267.5 956.7 1325.0 984.2 1360.0 1010.0C1395.0 1035.8 1422.0 1069.2 1440.0 1090.0C1458.0 1110.8 1468.0 1125.0 1468.0 1135.0C1468.0 1145.0 1442.2 1140.8 1440.0 1150.0C1437.8 1159.2 1473.3 1179.7 1455.0 1190.0C1436.7 1200.3 1375.8 1211.2 1330.0 1212.0C1284.2 1212.8 1228.3 1201.7 1180.0 1195.0C1131.7 1188.3 1076.7 1164.5 1040.0 1172.0C1003.3 1179.5 988.7 1223.3 960.0 1240.0C931.3 1256.7 877.2 1276.2 868.0 1272.0C858.8 1267.8 893.8 1232.8 905.0 1215.0C916.2 1197.2 947.5 1184.2 935.0 1165.0C922.5 1145.8 857.5 1119.2 830.0 1100.0C802.5 1080.8 798.3 1054.2 770.0 1050.0C741.7 1045.8 694.2 1075.0 660.0 1075.0C625.8 1075.0 566.7 1056.7 565.0 1050.0C563.3 1043.3 627.5 1041.7 650.0 1035.0C672.5 1028.3 706.7 1024.2 700.0 1010.0C693.3 995.8 640.0 973.3 610.0 950.0C580.0 926.7 546.7 886.7 520.0 870.0C493.3 853.3 473.3 844.2 450.0 850.0C426.7 855.8 400.8 892.5 380.0 905.0C359.2 917.5 325.8 930.8 325.0 925.0C324.2 919.2 361.7 892.5 375.0 870.0C388.3 847.5 405.8 818.3 405.0 790.0C404.2 761.7 385.8 729.2 370.0 700.0C354.2 670.8 305.8 623.3 310.0 615.0Z" fill="url(#fb)" stroke="#7f9fd6" stroke-width="16" stroke-opacity=".45" stroke-linejoin="round"/><path d="M310.0 615.0C314.2 606.7 368.3 629.2 395.0 650.0C421.7 670.8 445.8 717.5 470.0 740.0C494.2 762.5 511.7 775.0 540.0 785.0C568.3 795.0 612.5 798.3 640.0 800.0C667.5 801.7 705.0 813.3 705.0 795.0C705.0 776.7 671.7 726.7 640.0 690.0C608.3 653.3 515.0 586.7 515.0 575.0C515.0 563.3 604.2 595.8 640.0 620.0C675.8 644.2 705.0 691.7 730.0 720.0C755.0 748.3 768.3 780.0 790.0 790.0C811.7 800.0 836.7 787.5 860.0 780.0C883.3 772.5 900.0 750.8 930.0 745.0C960.0 739.2 1014.2 745.0 1040.0 745.0C1065.8 745.0 1073.3 734.2 1085.0 745.0C1096.7 755.8 1101.7 787.5 1110.0 810.0C1118.3 832.5 1115.0 859.2 1135.0 880.0C1155.0 900.8 1192.5 913.3 1230.0 935.0C1267.5 956.7 1325.0 984.2 1360.0 1010.0C1395.0 1035.8 1422.0 1069.2 1440.0 1090.0C1458.0 1110.8 1468.0 1125.0 1468.0 1135.0C1468.0 1145.0 1442.2 1140.8 1440.0 1150.0C1437.8 1159.2 1473.3 1179.7 1455.0 1190.0C1436.7 1200.3 1375.8 1211.2 1330.0 1212.0C1284.2 1212.8 1228.3 1201.7 1180.0 1195.0C1131.7 1188.3 1076.7 1164.5 1040.0 1172.0C1003.3 1179.5 988.7 1223.3 960.0 1240.0C931.3 1256.7 877.2 1276.2 868.0 1272.0C858.8 1267.8 893.8 1232.8 905.0 1215.0C916.2 1197.2 947.5 1184.2 935.0 1165.0C922.5 1145.8 857.5 1119.2 830.0 1100.0C802.5 1080.8 798.3 1054.2 770.0 1050.0C741.7 1045.8 694.2 1075.0 660.0 1075.0C625.8 1075.0 566.7 1056.7 565.0 1050.0C563.3 1043.3 627.5 1041.7 650.0 1035.0C672.5 1028.3 706.7 1024.2 700.0 1010.0C693.3 995.8 640.0 973.3 610.0 950.0C580.0 926.7 546.7 886.7 520.0 870.0C493.3 853.3 473.3 844.2 450.0 850.0C426.7 855.8 400.8 892.5 380.0 905.0C359.2 917.5 325.8 930.8 325.0 925.0C324.2 919.2 361.7 892.5 375.0 870.0C388.3 847.5 405.8 818.3 405.0 790.0C404.2 761.7 385.8 729.2 370.0 700.0C354.2 670.8 305.8 623.3 310.0 615.0Z" fill="url(#fb)" stroke="#93b2e4" stroke-width="6" stroke-linejoin="round"/><path d="M310.0 615.0C314.2 606.7 368.3 629.2 395.0 650.0C421.7 670.8 445.8 717.5 470.0 740.0C494.2 762.5 511.7 775.0 540.0 785.0C568.3 795.0 612.5 798.3 640.0 800.0C667.5 801.7 705.0 813.3 705.0 795.0C705.0 776.7 671.7 726.7 640.0 690.0C608.3 653.3 515.0 586.7 515.0 575.0C515.0 563.3 604.2 595.8 640.0 620.0C675.8 644.2 705.0 691.7 730.0 720.0C755.0 748.3 768.3 780.0 790.0 790.0C811.7 800.0 836.7 787.5 860.0 780.0C883.3 772.5 900.0 750.8 930.0 745.0C960.0 739.2 1014.2 745.0 1040.0 745.0C1065.8 745.0 1073.3 734.2 1085.0 745.0C1096.7 755.8 1101.7 787.5 1110.0 810.0C1118.3 832.5 1115.0 859.2 1135.0 880.0C1155.0 900.8 1192.5 913.3 1230.0 935.0C1267.5 956.7 1325.0 984.2 1360.0 1010.0C1395.0 1035.8 1422.0 1069.2 1440.0 1090.0C1458.0 1110.8 1468.0 1125.0 1468.0 1135.0C1468.0 1145.0 1442.2 1140.8 1440.0 1150.0C1437.8 1159.2 1473.3 1179.7 1455.0 1190.0C1436.7 1200.3 1375.8 1211.2 1330.0 1212.0C1284.2 1212.8 1228.3 1201.7 1180.0 1195.0C1131.7 1188.3 1076.7 1164.5 1040.0 1172.0C1003.3 1179.5 988.7 1223.3 960.0 1240.0C931.3 1256.7 877.2 1276.2 868.0 1272.0C858.8 1267.8 893.8 1232.8 905.0 1215.0C916.2 1197.2 947.5 1184.2 935.0 1165.0C922.5 1145.8 857.5 1119.2 830.0 1100.0C802.5 1080.8 798.3 1054.2 770.0 1050.0C741.7 1045.8 694.2 1075.0 660.0 1075.0C625.8 1075.0 566.7 1056.7 565.0 1050.0C563.3 1043.3 627.5 1041.7 650.0 1035.0C672.5 1028.3 706.7 1024.2 700.0 1010.0C693.3 995.8 640.0 973.3 610.0 950.0C580.0 926.7 546.7 886.7 520.0 870.0C493.3 853.3 473.3 844.2 450.0 850.0C426.7 855.8 400.8 892.5 380.0 905.0C359.2 917.5 325.8 930.8 325.0 925.0C324.2 919.2 361.7 892.5 375.0 870.0C388.3 847.5 405.8 818.3 405.0 790.0C404.2 761.7 385.8 729.2 370.0 700.0C354.2 670.8 305.8 623.3 310.0 615.0Z" fill="url(#ft)"/><path d="M868 1272C905 1215 935 1165 960 1150L1040 1172C960 1240 905 1262 868 1272Z" fill="#3f5176" fill-opacity=".7"/><path d="M500 790C640 830 800 850 980 900C1100 935 1250 985 1380 1060" fill="none" stroke="#c9d3df" stroke-width="14" stroke-opacity=".55" stroke-linecap="round"/><path d="M780 1045C860 1050 960 1080 1060 1150C990 1150 850 1120 780 1045Z" fill="#dfe6ee" fill-opacity=".8"/><path d="M1075 1120C1100 1040 1140 1010 1175 1000" fill="none" stroke="#3c4756" stroke-width="10" stroke-opacity=".7"/><ellipse cx="1290" cy="1110" rx="26" ry="18" fill="#ffffff"/><path d="M1385 1165L1455 1140L1450 1180Z" fill="#2f3845"/><path d="M905 770L950 712L968 770Z" fill="#f4f0ea"/><path d="M705 815L850 795L965 810V1090L850 1010L705 985Z" fill="#ffffff" fill-opacity=".38"/><path d="M880 755L1035 795L1015 950L850 900Z" fill="#d98888" fill-opacity=".42" stroke="#d24a4a" stroke-width="4" stroke-opacity=".7"/><path d="M850 900L1000 960L935 1048L775 985Z" fill="#9fe07a" fill-opacity=".45" stroke="#7fdc4a" stroke-width="4" stroke-opacity=".6"/><path d="M850 770L790 830L775 985L850 900Z" fill="#8f9af0" fill-opacity=".3" stroke="#4657e6" stroke-width="4" stroke-opacity=".8"/></g><path d="M1631.800 783.100L1644.600 655" stroke="#8fe64a" stroke-width="3.600"/><path d="M1631.200 655.500Q1645 659.500 1658.600 653.500L1648.700 611.500Z" fill="#8aee3c"/><path d="M1645 657L1658.600 653.500L1648.700 611.500Z" fill="#6fd528"/><path d="M1631.800 783.100L1775 830" stroke="#3a5cf0" stroke-width="3.600"/><path d="M1774 817.500Q1769.500 831 1772 844L1817.500 843.500Z" fill="#1f49f5"/><path d="M1774 817.500L1817.500 843.500L1790 832Z" fill="#3d63ff"/><path d="M1631.800 783.100L1565 858" stroke="#e5533d" stroke-width="3.600"/><path d="M1552 850Q1565 853 1575 866.500L1540.500 886Z" fill="#e23b26"/><path d="M1552 850L1540.500 886L1560 866Z" fill="#c42d1b"/><circle cx="1671" cy="405.7" r="26.600" fill="#fcf1da"/><path d="M1708.5 405.7L1734.1 405.7" stroke="#fcf1da" stroke-width="8.700" stroke-linecap="round"/><path d="M1706.6 420.4L1714.0 423.5" stroke="#fcf1da" stroke-width="8.700" stroke-linecap="round"/><path d="M1697.2 431.9L1712.0 446.7" stroke="#fcf1da" stroke-width="8.700" stroke-linecap="round"/><path d="M1685.7 441.3L1688.8 448.7" stroke="#fcf1da" stroke-width="8.700" stroke-linecap="round"/><path d="M1671.0 443.2L1671.0 468.8" stroke="#fcf1da" stroke-width="8.700" stroke-linecap="round"/><path d="M1656.3 441.3L1653.2 448.7" stroke="#fcf1da" stroke-width="8.700" stroke-linecap="round"/><path d="M1644.8 431.9L1630.0 446.7" stroke="#fcf1da" stroke-width="8.700" stroke-linecap="round"/><path d="M1635.4 420.4L1628.0 423.5" stroke="#fcf1da" stroke-width="8.700" stroke-linecap="round"/><path d="M1633.5 405.7L1607.9 405.7" stroke="#fcf1da" stroke-width="8.700" stroke-linecap="round"/><path d="M1635.4 391.0L1628.0 387.9" stroke="#fcf1da" stroke-width="8.700" stroke-linecap="round"/><path d="M1644.8 379.5L1630.0 364.7" stroke="#fcf1da" stroke-width="8.700" stroke-linecap="round"/><path d="M1656.3 370.1L1653.2 362.7" stroke="#fcf1da" stroke-width="8.700" stroke-linecap="round"/><path d="M1671.0 368.2L1671.0 342.6" stroke="#fcf1da" stroke-width="8.700" stroke-linecap="round"/><path d="M1685.7 370.1L1688.8 362.7" stroke="#fcf1da" stroke-width="8.700" stroke-linecap="round"/><path d="M1697.2 379.5L1712.0 364.7" stroke="#fcf1da" stroke-width="8.700" stroke-linecap="round"/><path d="M1706.6 391.0L1714.0 387.9" stroke="#fcf1da" stroke-width="8.700" stroke-linecap="round"/><path d="M1640 398L1700 412" stroke="#cfc7b4" stroke-width="1" stroke-opacity=".6"/><g fill="#ffffff"><circle cx="958.700" cy="507.400" r="9.900"/><circle cx="979.600" cy="495.800" r="11.500"/><rect x="960" y="503.500" width="35.200" height="23.500" rx="3"/><path d="M994.500 510.800L1007 508V522L994.500 516Z"/><circle cx="969" cy="478.300" r="3.100"/><circle cx="973.300" cy="476.300" r="3.500"/><rect x="967.500" y="477.500" width="9.500" height="5.700" rx="1"/><path d="M976.500 479.200L979.300 477.800V482.200L976.500 481Z"/></g><g><defs><linearGradient id="gw" x1="0" y1="0" x2="1" y2="1"><stop offset="0" stop-color="#f2f2f2"/><stop offset="1" stop-color="#c9c9c9"/></linearGradient></defs><path d="M2204.500 379L2180 365.500Q2170.500 374 2181 384.500Z" fill="url(#gw)"/><path d="M2233 377.500L2236.500 363Q2244 358 2250 366.500Z" fill="url(#gw)"/><path d="M2206 329.500Q2220 326.500 2233.500 329.500L2219.800 368.500Z" fill="#8fca52"/><path d="M2206 329.500Q2220 332.500 2233.500 329.500Q2220 326.500 2206 329.500Z" fill="#a9dc70"/><path d="M2220 402L2209.700 427Q2220 434.500 2230.500 427Z" fill="url(#gw)"/><path d="M2202.300 377.500L2219 371L2236.400 377.500L2220 385.500Z" fill="#f4f4f4"/><path d="M2202.300 377.500L2220 385.500V403L2202.300 395.500Z" fill="#e0e0e0"/><path d="M2236.400 377.500L2220 385.500V403L2236.400 395.500Z" fill="#c6c6c6"/><path d="M2234.200 390.300L2278 389.500Q2279.500 403 2269 416.200Z" fill="#5470e0"/><path d="M2278 389.500Q2279.500 403 2269 416.200Q2271 402 2278 389.500Z" fill="#4360d6"/><path d="M2209.700 394L2169.700 405Q2171 422 2193.400 429.600Z" fill="#c85544"/><path d="M2169.700 405Q2164.500 419 2180 428Q2190 432 2193.400 429.600Q2188 412 2169.700 405Z" fill="#d96655"/></g><path d="M2116 299H2148M2116 304.500H2148" stroke="#2f4242" stroke-width="2"/><g opacity=".5"><rect x="2278.500" y="322" width="14" height="10" fill="#ffffff"/><path d="M2281.500 322V319.500A3.800 3.800 0 0 1 2289 319.500" fill="none" stroke="#ffffff" stroke-width="2"/></g><path d="M2190 478L2170 487.500L2190 497M2170 487.500H2190" fill="none" stroke="#cfcfcf" stroke-width="2"/></svg>
</div>
<span class="a t" style="left:2213.7px;top:297.0px;font-size:23px;line-height:29px;color:#f2f2f2;-webkit-text-stroke:0.9px #f2f2f2;">y</span>
<span class="a t" style="left:2158.1px;top:411.0px;font-size:23px;line-height:29px;color:#f2f2f2;-webkit-text-stroke:0.9px #f2f2f2;">x</span>
<span class="a t" style="left:2283.2px;top:390.0px;font-size:23px;line-height:29px;color:#f2f2f2;-webkit-text-stroke:0.9px #f2f2f2;">z</span>
<span class="a t" style="left:2197.0px;top:472.0px;font-size:25px;line-height:31px;color:#cfcfcf;letter-spacing:-0.70px;">Persp</span>
<div class="a" style="left:669px;top:286px;width:78px;height:337px;background:#1e2021;border-radius:8px;"></div>
<div class="a" style="left:693px;top:298px;width:30px;height:1.5px;background:#555;"></div>
<div class="a" style="left:693px;top:303px;width:30px;height:1.5px;background:#555;"></div>
<div class="a" style="left:675px;top:321px;width:66px;height:40px;background:#3f3f3f;border-radius:4px;"></div>
<svg class="a" style="left:693px;top:326px;" width="30" height="30" viewBox="0 0 30 30"><path d="M15 2L27 8.500V21.500L15 28L3 21.500V8.500Z M3 8.500L15 15L27 8.500M15 15V28" fill="none" stroke="#b29680" stroke-width="1.600" stroke-linejoin="round"/></svg>
<div class="a" style="left:675px;top:367.5px;width:66px;height:39.5px;background:#4a4a4a;border-radius:6px 6px 0 0;"></div>
<svg class="a" style="left:694px;top:371px;" width="28" height="32" viewBox="0 0 28 32"><path d="M6 31C3 24 1 19 0.500 15.500C2 13.500 4 14 5 16L6.500 19L5.500 6C5.500 3.500 8.500 3.500 9 6L10.500 15L10.500 3C10.500 0 14 0 14.500 3L15 15L16.500 4.500C17 2 20 2.500 20 5L19.500 16L22 9C23 6.500 26 7.500 25.500 10L23 21C22.500 25 21.500 28 20 31Z" fill="#d6d6d6"/></svg>
<div class="a" style="left:675px;top:409px;width:66px;height:40px;background:#47638a;"></div>
<svg class="a" style="left:692px;top:413px;" width="32" height="32" viewBox="0 0 32 32"><path d="M16 1V31M1 16H31" stroke="#f2f2f2" stroke-width="2"/><path d="M11 6L16 1L21 6M11 26L16 31L21 26M6 11L1 16L6 21M26 11L31 16L26 21" fill="none" stroke="#f2f2f2" stroke-width="2"/><circle cx="16" cy="16" r="4" fill="#47638a"/></svg>
<div class="a" style="left:675px;top:451.5px;width:66px;height:39.5px;background:#4a4a4a;"></div>
<svg class="a" style="left:693px;top:456px;" width="30" height="30" viewBox="0 0 30 30"><path d="M17.500 27.500A12.500 12.500 0 0 0 21 4" fill="none" stroke="#c4c4c4" stroke-width="2.200"/><path d="M21 12.500V4H29.500" fill="none" stroke="#c4c4c4" stroke-width="2.200"/><path d="M13.500 2.500A12.500 12.500 0 0 0 10 26" fill="none" stroke="#c4c4c4" stroke-width="2.200"/><path d="M10 17.500V26H1.500" fill="none" stroke="#c4c4c4" stroke-width="2.200"/></svg>
<div class="a" style="left:675px;top:493.5px;width:66px;height:39.5px;background:#4a4a4a;"></div>
<svg class="a" style="left:693px;top:498px;" width="30" height="30" viewBox="0 0 30 30"><rect x="2" y="2" width="26" height="26" fill="none" stroke="#c4c4c4" stroke-width="2"/><rect x="2" y="20" width="8" height="8" fill="none" stroke="#c4c4c4" stroke-width="2"/><path d="M12.500 18L23.500 7M16 6.500H24V14.500" fill="none" stroke="#c4c4c4" stroke-width="2"/></svg>
<div class="a" style="left:675px;top:535.5px;width:66px;height:39.5px;background:#4a4a4a;"></div>
<svg class="a" style="left:693px;top:540px;" width="30" height="30" viewBox="0 0 30 30"><path d="M10 4H20M10 26H20M4 10V20M26 10V20" fill="none" stroke="#c4c4c4" stroke-width="2"/><rect x="1" y="1" width="6" height="6" fill="#c4c4c4"/><rect x="23" y="1" width="6" height="6" fill="#c4c4c4"/><rect x="1" y="23" width="6" height="6" fill="#c4c4c4"/><rect x="23" y="23" width="6" height="6" fill="#c4c4c4"/></svg>
<div class="a" style="left:675px;top:577.5px;width:66px;height:39.5px;background:#4a4a4a;border-radius:0 0 6px 6px;"></div>
<svg class="a" style="left:692px;top:581px;" width="32" height="32" viewBox="0 0 32 32"><circle cx="16" cy="16" r="11" fill="none" stroke="#c4c4c4" stroke-width="2" stroke-dasharray="13 4.300"/><path d="M16 7V25M7 16H25" stroke="#c4c4c4" stroke-width="2"/><path d="M13 10L16 7L19 10M13 22L16 25L19 22M10 13L7 16L10 19M22 13L25 16L22 19" fill="none" stroke="#c4c4c4" stroke-width="2"/><path d="M26 1H31V6ZM1 26V31H6Z" fill="#c4c4c4"/></svg>
<div class="a" style="left:2334px;top:192px;width:682px;height:1654px;background:#383838;"></div>
<div class="a" style="left:2334px;top:192px;width:682px;height:38px;background:#282828;"></div>
<div class="a" style="left:2334px;top:192px;width:186px;height:39px;background:#3c3c3c;border-radius:6px 6px 0 0;"></div>
<svg class="a" style="left:2351px;top:200px;" width="24" height="24" viewBox="0 0 24 24"><circle cx="12" cy="12.500" r="10.200" fill="#c4c4c4"/><rect x="10.300" y="10.800" width="3.500" height="7.800" fill="#3c3c3c"/><circle cx="12.050" cy="7.400" r="2" fill="#3c3c3c"/></svg>
<span class="a t" style="left:2382.0px;top:197.5px;font-size:25px;line-height:31px;color:#d0d0d0;letter-spacing:0.14px;">Inspector</span>
<svg class="a" style="left:2943px;top:197px;" width="22" height="26" viewBox="0 0 22 26"><rect x="2" y="14" width="17" height="10" fill="none" stroke="#c4c4c4" stroke-width="2.4"/><path d="M6 14V8.5a5 5 0 0 1 10 0V10" fill="none" stroke="#c4c4c4" stroke-width="2.4"/></svg>
<svg class="a" style="left:2984px;top:196px;" width="8" height="28" viewBox="0 0 8 28"><circle cx="4" cy="4" r="2.6" fill="#c4c4c4"/><circle cx="4" cy="14" r="2.6" fill="#c4c4c4"/><circle cx="4" cy="24" r="2.6" fill="#c4c4c4"/></svg>
<div class="a" style="left:2334px;top:230px;width:682px;height:227px;background:#3c3c3c;"></div>
<svg class="a" style="left:2348px;top:250.67px;" width="41.08" height="42.660000000000004" viewBox="0 0 26 27"><path d="M13 .800L25.200 7V20.200L13 26.400L.800 20.200V7Z" fill="#80cdfb"/><path d="M13 .800L25.200 7L13 13.200L.800 7Z" fill="#8fd5fd"/><path d="M.800 7L13 13.200L25.200 7M13 13.200V26.400" fill="none" stroke="#3d4a55" stroke-width="1.700"/></svg>
<svg class="a" style="left:2387.5px;top:292.0px;" width="13" height="8" viewBox="0 0 13 8"><path d="M0 0H13L6.5 8Z" fill="#c4c4c4"/></svg>
<div class="a" style="left:2428px;top:252px;width:28px;height:28px;background:#2a2a2a;border-radius:4px;box-shadow:inset 0 0 0 1px #1c1c1c;"></div>
<svg class="a" style="left:2433px;top:258px;" width="18" height="16" viewBox="0 0 18 16"><path d="M1.500 8.500L6.500 13.500L16.500 2" fill="none" stroke="#e6e6e6" stroke-width="2.800"/></svg>
<div class="a" style="left:2468px;top:248px;width:387px;height:35px;background:#2a2a2a;border-radius:4px;box-shadow:inset 0 0 0 1px #202020;"></div>
<span class="a t" style="left:2475.0px;top:252.0px;font-size:25px;line-height:31px;color:#dadada;letter-spacing:0.73px;-webkit-text-stroke:0.9px #dadada;">MyTunaProject</span>
<div class="a" style="left:2862px;top:252px;width:28px;height:28px;background:#2a2a2a;border-radius:4px;box-shadow:inset 0 0 0 1px #1c1c1c;"></div>
<span class="a t" style="left:2899.0px;top:250.5px;font-size:25px;line-height:31px;color:#c8c8c8;letter-spacing:0.29px;">Static</span>
<svg class="a" style="left:2989.0px;top:262.0px;" width="14" height="8" viewBox="0 0 14 8"><path d="M0 0H14L7.0 8Z" fill="#c4c4c4"/></svg>
<span class="a t" style="left:2415.5px;top:299.5px;font-size:25px;line-height:31px;color:#c8c8c8;letter-spacing:0.84px;">Tag</span>
<div class="a" style="left:2468px;top:298px;width:228px;height:32px;background:#515151;border-radius:4px;box-shadow:inset 0 0 0 1px #303030;"></div>
<span class="a t" style="left:2475.0px;top:298.5px;font-size:25px;line-height:31px;color:#e0e0e0;letter-spacing:0.08px;">Untagged</span>
<svg class="a" style="left:2671.0px;top:311.0px;" width="14" height="8" viewBox="0 0 14 8"><path d="M0 0H14L7.0 8Z" fill="#c4c4c4"/></svg>
<span class="a t" style="left:2725.0px;top:299.5px;font-size:25px;line-height:31px;color:#c8c8c8;letter-spacing:0.11px;">Layer</span>
<div class="a" style="left:2797px;top:298px;width:209px;height:32px;background:#515151;border-radius:4px;box-shadow:inset 0 0 0 1px #303030;"></div>
<span class="a t" style="left:2804.0px;top:298.5px;font-size:25px;line-height:31px;color:#e0e0e0;letter-spacing:0.46px;">Default</span>
<svg class="a" style="left:2981.0px;top:311.0px;" width="14" height="8" viewBox="0 0 14 8"><path d="M0 0H14L7.0 8Z" fill="#c4c4c4"/></svg>
<span class="a t" style="left:2385.0px;top:363.5px;font-size:25px;line-height:31px;color:#c8c8c8;letter-spacing:-0.13px;">Prefab</span>
<div class="a" style="left:2467px;top:361px;width:540px;height:34px;background:#2a2a2a;border-radius:4px;box-shadow:inset 0 0 0 1px #202020;"></div>
<div class="a" style="left:2970px;top:362px;width:36px;height:32px;background:#353535;border-radius:0 4px 4px 0;"></div>
<svg class="a" style="left:2473px;top:367.2px;" width="20.8" height="21.6" viewBox="0 0 26 27"><path d="M13 .800L25.200 7V20.200L13 26.400L.800 20.200V7Z" fill="#80cdfb"/><path d="M13 .800L25.200 7L13 13.200L.800 7Z" fill="#8fd5fd"/><path d="M.800 7L13 13.200L25.200 7M13 13.200V26.400" fill="none" stroke="#3d4a55" stroke-width="1.700"/></svg>
<span class="a t" style="left:2499.0px;top:363.5px;font-size:25px;line-height:31px;color:#d2d2d2;letter-spacing:0.57px;">MyTunaProject</span>
<svg class="a" style="left:2977px;top:367px;" width="22" height="22" viewBox="0 0 22 22"><circle cx="11" cy="11" r="9" fill="none" stroke="#c4c4c4" stroke-width="2"/><circle cx="11" cy="11" r="3.600" fill="#c4c4c4"/></svg>
<div class="a" style="left:2468px;top:406px;width:188px;height:32px;background:#515151;border-radius:4px;box-shadow:inset 0 0 0 1px #303030;"></div>
<span class="a t" style="left:2475.0px;top:406.5px;font-size:25px;line-height:31px;color:#e0e0e0;letter-spacing:-0.17px;">Overrides</span>
<svg class="a" style="left:2631.0px;top:419.0px;" width="14" height="8" viewBox="0 0 14 8"><path d="M0 0H14L7.0 8Z" fill="#c4c4c4"/></svg>
<div class="a" style="left:2723px;top:406px;width:141px;height:32px;background:#585858;border-radius:4px;box-shadow:inset 0 0 0 1px #303030;"></div>
<span class="a t" style="left:2757.5px;top:406.5px;font-size:25px;line-height:31px;color:#e6e6e6;letter-spacing:0.50px;">Select</span>
<div class="a" style="left:2874px;top:406px;width:128px;height:32px;background:#585858;border-radius:4px;box-shadow:inset 0 0 0 1px #303030;"></div>
<span class="a t" style="left:2908.5px;top:406.5px;font-size:25px;line-height:31px;color:#e6e6e6;letter-spacing:-0.72px;">Open</span>
<div class="a" style="left:2334px;top:457px;width:682px;height:2px;background:#1a1a1a;"></div>
<div class="a" style="left:2334px;top:459px;width:682px;height:41px;background:#3e3e3e;"></div>
<svg class="a" style="left:2345.5px;top:472.0px;" width="18" height="14" viewBox="0 0 18 14"><path d="M0 0H18L9.0 14Z" fill="#6e6e6e"/></svg>
<svg class="a" style="left:2376px;top:466px;" width="28" height="30" viewBox="0 0 28 30"><path d="M14.300 11V3.800" stroke="#c8e64a" stroke-width="4.600" stroke-linecap="round"/><path d="M11 17L4.800 21.300" stroke="#7cc4f5" stroke-width="4.600" stroke-linecap="round"/><path d="M17.600 17L23.800 20.800" stroke="#f0703f" stroke-width="4.600" stroke-linecap="round"/></svg>
<span class="a t" style="left:2455.0px;top:464.5px;font-size:25px;line-height:31px;color:#e0e0e0;letter-spacing:1.13px;-webkit-text-stroke:0.9px #e0e0e0;">Transform</span>
<svg class="a" style="left:2898px;top:468px;" width="24" height="24" viewBox="0 0 24 24"><circle cx="12" cy="12" r="12" fill="#c4c4c4"/></svg>
<span class="a t" style="left:2904.4px;top:468.0px;font-size:20px;line-height:25px;color:#3e3e3e;-webkit-text-stroke:0.9px #3e3e3e;">?</span>
<svg class="a" style="left:2938px;top:468px;" width="26" height="24" viewBox="0 0 26 24"><path d="M0 6.500H24M0 17.500H24" stroke="#c4c4c4" stroke-width="2.400"/><path d="M16 1V12M8 12V23" stroke="#3e3e3e" stroke-width="7"/><path d="M16 1V12M8 12V23" stroke="#c4c4c4" stroke-width="2.800"/></svg>
<svg class="a" style="left:2986px;top:466px;" width="8" height="28" viewBox="0 0 8 28"><circle cx="4" cy="4" r="2.6" fill="#c4c4c4"/><circle cx="4" cy="14" r="2.6" fill="#c4c4c4"/><circle cx="4" cy="24" r="2.6" fill="#c4c4c4"/></svg>
<span class="a t" style="left:2373.0px;top:512.5px;font-size:25px;line-height:31px;color:#dcdcdc;letter-spacing:0.72px;-webkit-text-stroke:0.9px #dcdcdc;">Position</span>
<span class="a t" style="left:2617.0px;top:512.5px;font-size:25px;line-height:31px;color:#d2d2d2;-webkit-text-stroke:0.9px #d2d2d2;">X</span>
<div class="a" style="left:2646px;top:510.5px;width:93px;height:35.0px;background:#2a2a2a;border-radius:4px;box-shadow:inset 0 0 0 1px #202020;"></div>
<span class="a t" style="left:2653.0px;top:512.5px;font-size:25px;line-height:31px;color:#dcdcdc;-webkit-text-stroke:0.9px #dcdcdc;">0</span>
<span class="a t" style="left:2751.0px;top:512.5px;font-size:25px;line-height:31px;color:#d2d2d2;-webkit-text-stroke:0.9px #d2d2d2;">Y</span>
<div class="a" style="left:2780px;top:510.5px;width:93.5px;height:35.0px;background:#2a2a2a;border-radius:4px;box-shadow:inset 0 0 0 1px #202020;"></div>
<span class="a t" style="left:2787.0px;top:512.5px;font-size:25px;line-height:31px;color:#dcdcdc;-webkit-text-stroke:0.9px #dcdcdc;">0</span>
<span class="a t" style="left:2885.0px;top:512.5px;font-size:25px;line-height:31px;color:#d2d2d2;-webkit-text-stroke:0.9px #d2d2d2;">Z</span>
<div class="a" style="left:2914px;top:510.5px;width:93.5px;height:35.0px;background:#2a2a2a;border-radius:4px;box-shadow:inset 0 0 0 1px #202020;"></div>
<span class="a t" style="left:2921.0px;top:512.5px;font-size:25px;line-height:31px;color:#dcdcdc;-webkit-text-stroke:0.9px #dcdcdc;">0</span>
<span class="a t" style="left:2373.0px;top:552.5px;font-size:25px;line-height:31px;color:#dcdcdc;letter-spacing:0.70px;-webkit-text-stroke:0.9px #dcdcdc;">Rotation</span>
<span class="a t" style="left:2617.0px;top:552.5px;font-size:25px;line-height:31px;color:#d2d2d2;-webkit-text-stroke:0.9px #d2d2d2;">X</span>
<div class="a" style="left:2646px;top:550.5px;width:93px;height:35.0px;background:#2a2a2a;border-radius:4px;box-shadow:inset 0 0 0 1px #202020;"></div>
<span class="a t" style="left:2653.0px;top:552.5px;font-size:25px;line-height:31px;color:#dcdcdc;-webkit-text-stroke:0.9px #dcdcdc;">0</span>
<span class="a t" style="left:2751.0px;top:552.5px;font-size:25px;line-height:31px;color:#d2d2d2;-webkit-text-stroke:0.9px #d2d2d2;">Y</span>
<div class="a" style="left:2780px;top:550.5px;width:93.5px;height:35.0px;background:#2a2a2a;border-radius:4px;box-shadow:inset 0 0 0 1px #202020;"></div>
<span class="a t" style="left:2787.0px;top:552.5px;font-size:25px;line-height:31px;color:#dcdcdc;-webkit-text-stroke:0.9px #dcdcdc;">0</span>
<span class="a t" style="left:2885.0px;top:552.5px;font-size:25px;line-height:31px;color:#d2d2d2;-webkit-text-stroke:0.9px #d2d2d2;">Z</span>
<div class="a" style="left:2914px;top:550.5px;width:93.5px;height:35.0px;background:#2a2a2a;border-radius:4px;box-shadow:inset 0 0 0 1px #202020;"></div>
<span class="a t" style="left:2921.0px;top:552.5px;font-size:25px;line-height:31px;color:#dcdcdc;-webkit-text-stroke:0.9px #dcdcdc;">0</span>
<span class="a t" style="left:2373.0px;top:592.5px;font-size:25px;line-height:31px;color:#c8c8c8;letter-spacing:0.11px;">Scale</span>
<span class="a t" style="left:2617.0px;top:592.5px;font-size:25px;line-height:31px;color:#d2d2d2;">X</span>
<div class="a" style="left:2644px;top:590.5px;width:95px;height:35.0px;background:#2a2a2a;border-radius:4px;box-shadow:inset 0 0 0 1px #202020;"></div>
<span class="a t" style="left:2651.0px;top:592.5px;font-size:25px;line-height:31px;color:#dcdcdc;">1</span>
<span class="a t" style="left:2751.0px;top:592.5px;font-size:25px;line-height:31px;color:#d2d2d2;">Y</span>
<div class="a" style="left:2778px;top:590.5px;width:95.5px;height:35.0px;background:#2a2a2a;border-radius:4px;box-shadow:inset 0 0 0 1px #202020;"></div>
<span class="a t" style="left:2785.0px;top:592.5px;font-size:25px;line-height:31px;color:#dcdcdc;">1</span>
<span class="a t" style="left:2885.0px;top:592.5px;font-size:25px;line-height:31px;color:#d2d2d2;">Z</span>
<div class="a" style="left:2912px;top:590.5px;width:95.5px;height:35.0px;background:#2a2a2a;border-radius:4px;box-shadow:inset 0 0 0 1px #202020;"></div>
<span class="a t" style="left:2919.0px;top:592.5px;font-size:25px;line-height:31px;color:#dcdcdc;">1</span>
<svg class="a" style="left:2571px;top:598px;" width="26" height="20" viewBox="0 0 26 20"><path d="M11 5H7A5 5 0 0 0 7 15H11M15 5H19A5 5 0 0 1 19 15H15M9 10H17" fill="none" stroke="#c4c4c4" stroke-width="2"/><path d="M4 1L22 19" stroke="#383838" stroke-width="5"/><path d="M4 1L22 19" stroke="#c4c4c4" stroke-width="2"/></svg>
<div class="a" style="left:2334px;top:644px;width:682px;height:2px;background:#1a1a1a;"></div>
<div class="a" style="left:2334px;top:646px;width:682px;height:41px;background:#3e3e3e;"></div>
<svg class="a" style="left:2345.5px;top:659.0px;" width="18" height="14" viewBox="0 0 18 14"><path d="M0 0H18L9.0 14Z" fill="#6e6e6e"/></svg>
<svg class="a" style="left:2378px;top:652px;" width="24" height="28" viewBox="0 0 24 28"><path d="M2 0H17L24 7V26A2 2 0 0 1 22 28H2A2 2 0 0 1 0 26V2A2 2 0 0 1 2 0Z" fill="#f3f6f0"/></svg>
<span class="a t" style="left:2383.9px;top:653.0px;font-size:22px;line-height:28px;color:#2f7d3a;-webkit-text-stroke:0.9px #2f7d3a;">#</span>
<span class="a t" style="left:2454.5px;top:651.5px;font-size:25px;line-height:31px;color:#e0e0e0;letter-spacing:0.86px;-webkit-text-stroke:0.9px #e0e0e0;">Content (Script)</span>
<svg class="a" style="left:2898px;top:655px;" width="24" height="24" viewBox="0 0 24 24"><circle cx="12" cy="12" r="12" fill="#c4c4c4"/></svg>
<span class="a t" style="left:2904.4px;top:655.0px;font-size:20px;line-height:25px;color:#3e3e3e;-webkit-text-stroke:0.9px #3e3e3e;">?</span>
<svg class="a" style="left:2938px;top:655px;" width="26" height="24" viewBox="0 0 26 24"><path d="M0 6.500H24M0 17.500H24" stroke="#c4c4c4" stroke-width="2.400"/><path d="M16 1V12M8 12V23" stroke="#3e3e3e" stroke-width="7"/><path d="M16 1V12M8 12V23" stroke="#c4c4c4" stroke-width="2.800"/></svg>
<svg class="a" style="left:2986px;top:653px;" width="8" height="28" viewBox="0 0 8 28"><circle cx="4" cy="4" r="2.6" fill="#c4c4c4"/><circle cx="4" cy="14" r="2.6" fill="#c4c4c4"/><circle cx="4" cy="24" r="2.6" fill="#c4c4c4"/></svg>
<span class="a t" style="left:2373.0px;top:696.5px;font-size:25px;line-height:31px;color:#7d7d7d;letter-spacing:0.22px;width:238.0px;overflow:hidden;">Script</span>
<div class="a" style="left:2614px;top:694.5px;width:394px;height:35.0px;background:#2f2f2f;border-radius:4px;box-shadow:inset 0 0 0 1px #202020;"></div>
<div class="a" style="left:2970px;top:695.5px;width:37px;height:33.0px;background:#343434;border-radius:0 4px 4px 0;"></div>
<span class="a t" style="left:2648.0px;top:696.5px;font-size:25px;line-height:31px;color:#7d7d7d;letter-spacing:0.41px;width:321.5px;overflow:hidden;">Content</span>
<svg class="a" style="left:2977px;top:701px;" width="22" height="22" viewBox="0 0 22 22"><circle cx="11" cy="11" r="9" fill="none" stroke="#777" stroke-width="2"/><circle cx="11" cy="11" r="3.600" fill="#777"/></svg>
<svg class="a" style="left:2623px;top:701px;" width="18" height="22" viewBox="0 0 18 22"><path d="M1.500 0H12L18 6V20.500A1.500 1.500 0 0 1 16.500 22H1.500A1.500 1.500 0 0 1 0 20.500V1.500A1.500 1.500 0 0 1 1.500 0Z" fill="#8e958c"/></svg>
<span class="a t" style="left:2627.5px;top:702.5px;font-size:16px;line-height:20px;color:#3f5f45;-webkit-text-stroke:0.9px #3f5f45;">#</span>
<span class="a t" style="left:2373.0px;top:736.5px;font-size:25px;line-height:31px;color:#c8c8c8;letter-spacing:-0.30px;width:238.0px;overflow:hidden;">Realtime Data Manager</span>
<div class="a" style="left:2614px;top:734.5px;width:394px;height:35.0px;background:#2a2a2a;border-radius:4px;box-shadow:inset 0 0 0 1px #202020;"></div>
<div class="a" style="left:2970px;top:735.5px;width:37px;height:33.0px;background:#353535;border-radius:0 4px 4px 0;"></div>
<span class="a t" style="left:2625.0px;top:736.5px;font-size:25px;line-height:31px;color:#d2d2d2;letter-spacing:-0.01px;width:344.5px;overflow:hidden;">None (Realtime Data Manager)</span>
<svg class="a" style="left:2977px;top:741px;" width="22" height="22" viewBox="0 0 22 22"><circle cx="11" cy="11" r="9" fill="none" stroke="#c4c4c4" stroke-width="2"/><circle cx="11" cy="11" r="3.600" fill="#c4c4c4"/></svg>
<span class="a t" style="left:2373.0px;top:776.5px;font-size:25px;line-height:31px;color:#c8c8c8;letter-spacing:-0.05px;width:238.0px;overflow:hidden;">User Presence Manager</span>
<div class="a" style="left:2614px;top:774.5px;width:394px;height:35.0px;background:#2a2a2a;border-radius:4px;box-shadow:inset 0 0 0 1px #202020;"></div>
<div class="a" style="left:2970px;top:775.5px;width:37px;height:33.0px;background:#353535;border-radius:0 4px 4px 0;"></div>
<span class="a t" style="left:2625.0px;top:776.5px;font-size:25px;line-height:31px;color:#d2d2d2;letter-spacing:-0.01px;width:344.5px;overflow:hidden;">None (User Presence Manager)</span>
<svg class="a" style="left:2977px;top:781px;" width="22" height="22" viewBox="0 0 22 22"><circle cx="11" cy="11" r="9" fill="none" stroke="#c4c4c4" stroke-width="2"/><circle cx="11" cy="11" r="3.600" fill="#c4c4c4"/></svg>
<span class="a t" style="left:2373.0px;top:816.5px;font-size:25px;line-height:31px;color:#c8c8c8;letter-spacing:0.19px;width:238.0px;overflow:hidden;">User Grouping Manager</span>
<div class="a" style="left:2614px;top:814.5px;width:394px;height:35.0px;background:#2a2a2a;border-radius:4px;box-shadow:inset 0 0 0 1px #202020;"></div>
<div class="a" style="left:2970px;top:815.5px;width:37px;height:33.0px;background:#353535;border-radius:0 4px 4px 0;"></div>
<span class="a t" style="left:2625.0px;top:816.5px;font-size:25px;line-height:31px;color:#d2d2d2;letter-spacing:0.05px;width:344.5px;overflow:hidden;">None (User Grouping Manager)</span>
<svg class="a" style="left:2977px;top:821px;" width="22" height="22" viewBox="0 0 22 22"><circle cx="11" cy="11" r="9" fill="none" stroke="#c4c4c4" stroke-width="2"/><circle cx="11" cy="11" r="3.600" fill="#c4c4c4"/></svg>
<span class="a t" style="left:2373.0px;top:856.5px;font-size:25px;line-height:31px;color:#c8c8c8;letter-spacing:-0.03px;width:238.0px;overflow:hidden;">Pairing Manager</span>
<div class="a" style="left:2614px;top:854.5px;width:394px;height:35.0px;background:#2a2a2a;border-radius:4px;box-shadow:inset 0 0 0 1px #202020;"></div>
<div class="a" style="left:2970px;top:855.5px;width:37px;height:33.0px;background:#353535;border-radius:0 4px 4px 0;"></div>
<span class="a t" style="left:2625.0px;top:856.5px;font-size:25px;line-height:31px;color:#d2d2d2;letter-spacing:0.01px;width:344.5px;overflow:hidden;">None (Pairing Manager)</span>
<svg class="a" style="left:2977px;top:861px;" width="22" height="22" viewBox="0 0 22 22"><circle cx="11" cy="11" r="9" fill="none" stroke="#c4c4c4" stroke-width="2"/><circle cx="11" cy="11" r="3.600" fill="#c4c4c4"/></svg>
<span class="a t" style="left:2373.0px;top:896.5px;font-size:25px;line-height:31px;color:#c8c8c8;letter-spacing:0.24px;width:238.0px;overflow:hidden;">Settings</span>
<div class="a" style="left:2614px;top:894.5px;width:394px;height:35.0px;background:#2a2a2a;border-radius:4px;box-shadow:inset 0 0 0 1px #202020;"></div>
<div class="a" style="left:2970px;top:895.5px;width:37px;height:33.0px;background:#353535;border-radius:0 4px 4px 0;"></div>
<span class="a t" style="left:2648.0px;top:896.5px;font-size:25px;line-height:31px;color:#d2d2d2;letter-spacing:0.21px;width:321.5px;overflow:hidden;">New Content Settings (ContentSettings)</span>
<svg class="a" style="left:2977px;top:901px;" width="22" height="22" viewBox="0 0 22 22"><circle cx="11" cy="11" r="9" fill="none" stroke="#c4c4c4" stroke-width="2"/><circle cx="11" cy="11" r="3.600" fill="#c4c4c4"/></svg>
<svg class="a" style="left:2621px;top:901px;" width="24" height="24" viewBox="0 0 24 24"><path d="M10 1L19 5.500V15L10 20L1 15V5.500ZM1 5.500L10 10L19 5.500M10 10V20" fill="none" stroke="#8fd0f5" stroke-width="1.800" stroke-linejoin="round"/></svg>
<svg class="a" style="left:2632px;top:909px;" width="14" height="16" viewBox="0 0 14 16"><path d="M5 1H4Q2.500 1 2.500 2.500V6Q2.500 7.500 1 8Q2.500 8.500 2.500 10V13.500Q2.500 15 4 15H5M9 1H10Q11.500 1 11.500 2.500V6Q11.500 7.500 13 8Q11.500 8.500 11.500 10V13.500Q11.500 15 10 15H9" fill="none" stroke="#f0764a" stroke-width="1.700"/></svg>
<div class="a" style="left:2371px;top:933px;width:627px;height:100px;background:#414141;border-radius:5px;box-shadow:inset 0 0 0 1px #242424;"></div>
<div class="a" style="left:2372px;top:934px;width:625px;height:39px;background:#353535;border-radius:4px 4px 0 0;"></div>
<div class="a" style="left:2372px;top:973px;width:625px;height:1.5px;background:#242424;"></div>
<span class="a t" style="left:2386.0px;top:937.5px;font-size:25px;line-height:31px;color:#d2d2d2;letter-spacing:0.05px;">On Initialized ()</span>
<span class="a t" style="left:2384.0px;top:990.5px;font-size:25px;line-height:31px;color:#d2d2d2;letter-spacing:0.34px;">List is empty</span>
<div class="a" style="left:2862px;top:1032px;width:108px;height:44px;background:#414141;border-radius:0 0 5px 5px;box-shadow:inset 0 0 0 1px #242424;"></div>
<div class="a" style="left:2863px;top:1030px;width:106px;height:4px;background:#414141;"></div>
<svg class="a" style="left:2885px;top:1046px;" width="20" height="20" viewBox="0 0 20 20"><path d="M10 1V19M1 10H19" stroke="#e6e6e6" stroke-width="3.600"/></svg>
<div class="a" style="left:2931px;top:1054px;width:13px;height:3.5px;background:#e6e6e6;"></div>
<div class="a" style="left:2334px;top:1090px;width:682px;height:2px;background:#1a1a1a;"></div>
<div class="a" style="left:2448px;top:1110px;width:457px;height:45px;background:#585858;border-radius:4px;box-shadow:inset 0 0 0 1px #303030;"></div>
<span class="a t" style="left:2586.0px;top:1117.0px;font-size:25px;line-height:31px;color:#e6e6e6;letter-spacing:-0.06px;">Add Component</span>
<div class="a" style="left:112px;top:1172px;width:2218px;height:674px;background:#383838;"></div>
<div class="a" style="left:112px;top:1172px;width:2218px;height:38px;background:#282828;"></div>
<div class="a" style="left:112px;top:1172px;width:162px;height:39px;background:#3c3c3c;border-radius:6px 6px 0 0;"></div>
<div class="a" style="left:112px;top:1172px;width:162px;height:2.5px;background:#38699d;border-radius:6px 6px 0 0;"></div>
<svg class="a" style="left:126px;top:1180px;" width="25" height="21" viewBox="0 0 24 20"><path d="M1.500 0H9.500L12.500 3.500H22.500A1.500 1.500 0 0 1 24 5V18.500A1.500 1.500 0 0 1 22.500 20H1.500A1.500 1.500 0 0 1 0 18.500V1.500A1.500 1.500 0 0 1 1.500 0Z" fill="#c4c4c4"/></svg>
<span class="a t" style="left:159.0px;top:1177.5px;font-size:25px;line-height:31px;color:#d0d0d0;letter-spacing:0.20px;">Project</span>
<svg class="a" style="left:292px;top:1181px;" width="20" height="20" viewBox="0 0 20 20"><rect x="0" y="0" width="20" height="20" rx="1.500" fill="#c4c4c4"/><path d="M3 5H17M3 9H14M3 13H17M3 17H12" stroke="#282828" stroke-width="1.800"/></svg>
<span class="a t" style="left:322.5px;top:1177.5px;font-size:25px;line-height:31px;color:#d0d0d0;letter-spacing:-0.12px;">Console</span>
<svg class="a" style="left:2259px;top:1177px;" width="22" height="26" viewBox="0 0 22 26"><rect x="2" y="14" width="17" height="10" fill="none" stroke="#c4c4c4" stroke-width="2.4"/><path d="M6 14V8.5a5 5 0 0 1 10 0V10" fill="none" stroke="#c4c4c4" stroke-width="2.4"/></svg>
<svg class="a" style="left:2300px;top:1176px;" width="8" height="28" viewBox="0 0 8 28"><circle cx="4" cy="4" r="2.6" fill="#c4c4c4"/><circle cx="4" cy="14" r="2.6" fill="#c4c4c4"/><circle cx="4" cy="24" r="2.6" fill="#c4c4c4"/></svg>
<div class="a" style="left:112px;top:1210px;width:2218px;height:40px;background:#3c3c3c;"></div>
<div class="a" style="left:112px;top:1250px;width:2218px;height:1.5px;background:#232323;"></div>
<svg class="a" style="left:126px;top:1218px;" width="24" height="24" viewBox="0 0 24 24"><path d="M12 0V24M0 12H24" stroke="#c4c4c4" stroke-width="3.600"/></svg>
<svg class="a" style="left:159.0px;top:1226.0px;" width="14" height="8" viewBox="0 0 14 8"><path d="M0 0H14L7.0 8Z" fill="#c4c4c4"/></svg>
<div class="a" style="left:1402px;top:1214px;width:636px;height:32px;background:#2a2a2a;border-radius:7px;box-shadow:inset 0 0 0 1px #1f1f1f;"></div>
<svg class="a" style="left:1412px;top:1223px;" width="16" height="16" viewBox="0 0 16 16"><circle cx="5.500" cy="5.500" r="4" fill="none" stroke="#c4c4c4" stroke-width="2.200"/><path d="M8.500 8.500L14 14" stroke="#c4c4c4" stroke-width="2.600"/></svg>
<div class="a" style="left:2002px;top:1215px;width:35px;height:30px;background:#323232;border-radius:0 7px 7px 0;"></div>
<svg class="a" style="left:2007px;top:1218px;" width="26" height="24" viewBox="0 0 26 24"><path d="M8 2H23V17H8Z" fill="none" stroke="#c4c4c4" stroke-width="2"/><path d="M1 14H10V23H1Z" fill="#323232" stroke="#c4c4c4" stroke-width="2"/><path d="M10 14L19 5.500M12.500 5.500H19V12" fill="none" stroke="#c4c4c4" stroke-width="2"/></svg>
<div class="a" style="left:2043px;top:1211px;width:1.5px;height:39px;background:#303030;"></div>
<div class="a" style="left:2095px;top:1211px;width:1.5px;height:39px;background:#303030;"></div>
<div class="a" style="left:2147px;top:1211px;width:1.5px;height:39px;background:#303030;"></div>
<div class="a" style="left:2199px;top:1211px;width:1.5px;height:39px;background:#303030;"></div>
<div class="a" style="left:2251px;top:1211px;width:1.5px;height:39px;background:#303030;"></div>
<svg class="a" style="left:2056px;top:1216px;" width="26" height="28" viewBox="0 0 26 28"><rect x="3" y="0" width="10" height="10" fill="#c4c4c4"/><circle cx="7" cy="19.500" r="7" fill="#c4c4c4"/><path d="M19 5L26 18H12.500Z" fill="#c4c4c4"/></svg>
<svg class="a" style="left:2108px;top:1219px;" width="24" height="22" viewBox="0 0 24 22"><path d="M0 12L12 1.500L23 0L22 11L10 22Z" fill="#c4c4c4"/><circle cx="18" cy="5" r="2" fill="#3c3c3c"/></svg>
<svg class="a" style="left:2159px;top:1217px;" width="28" height="26" viewBox="0 0 28 26"><path d="M8 0H20L28 7.500V18.500L20 26H8L0 18.500V7.500Z" fill="#c4c4c4"/><rect x="12.200" y="5" width="3.600" height="10.500" rx="1" fill="#3c3c3c"/><circle cx="14" cy="19.500" r="2" fill="#3c3c3c"/></svg>
<svg class="a" style="left:2212px;top:1218px;" width="24" height="23" viewBox="0 0 24 23"><path d="M12 0L15.200 8H24L17 13.500L19.500 22.500L12 17.200L4.500 22.500L7 13.500L0 8H8.800Z" fill="#8a8a8a"/></svg>
<svg class="a" style="left:2262px;top:1218px;" width="30" height="24" viewBox="0 0 30 24"><path d="M1 12C5.500 4.500 10 3 15 3S24.500 4.500 29 12C24.500 19.500 20 21 15 21S5.500 19.500 1 12Z" fill="none" stroke="#c4c4c4" stroke-width="2"/><circle cx="15" cy="12" r="4" fill="none" stroke="#c4c4c4" stroke-width="2"/><path d="M4 22L26 1" stroke="#3c3c3c" stroke-width="5"/><path d="M4 22L26 1" stroke="#c4c4c4" stroke-width="2.200"/></svg>
<span class="a t" style="left:2296.0px;top:1216.0px;font-size:23px;line-height:29px;color:#c8c8c8;letter-spacing:-1.50px;">51</span>
<div class="a" style="left:112px;top:1251.5px;width:391px;height:594.5px;background:#383838;"></div>
<div class="a" style="left:503px;top:1251.5px;width:23px;height:594.5px;background:#353535;"></div>
<div class="a" style="left:526px;top:1251.5px;width:2.5px;height:594.5px;background:#222;"></div>
<svg class="a" style="left:508.0px;top:1264.0px;" width="14" height="8" viewBox="0 0 14 8"><path d="M0 8H14L7.0 0Z" fill="#c4c4c4"/></svg>
<div class="a" style="left:504px;top:1284px;width:20px;height:144px;background:#5f5f5f;border-radius:10px;"></div>
<svg class="a" style="left:508.0px;top:1826.0px;" width="14" height="8" viewBox="0 0 14 8"><path d="M0 0H14L7.0 8Z" fill="#c4c4c4"/></svg>
<svg class="a" style="left:120.0px;top:1261.0px;" width="18" height="14" viewBox="0 0 18 14"><path d="M0 0H18L9.0 14Z" fill="#6e6e6e"/></svg>
<svg class="a" style="left:148px;top:1255px;" width="24" height="23" viewBox="0 0 24 23"><path d="M12 0L15.200 8H24L17 13.500L19.500 22.500L12 17.200L4.500 22.500L7 13.500L0 8H8.800Z" fill="#d8d8d8"/></svg>
<span class="a t" style="left:183.0px;top:1251.5px;font-size:25px;line-height:31px;color:#dcdcdc;letter-spacing:0.52px;-webkit-text-stroke:0.9px #dcdcdc;">Favorites</span>
<svg class="a" style="left:176px;top:1288px;" width="24" height="24" viewBox="0 0 24 24"><circle cx="9.500" cy="9.500" r="7.500" fill="none" stroke="#c4c4c4" stroke-width="2"/><path d="M15 15L22 22" stroke="#c4c4c4" stroke-width="3.400" stroke-linecap="round"/></svg>
<span class="a t" style="left:209.0px;top:1284.5px;font-size:25px;line-height:31px;color:#d2d2d2;letter-spacing:-0.40px;">All In Progress</span>
<svg class="a" style="left:176px;top:1320px;" width="24" height="24" viewBox="0 0 24 24"><circle cx="9.500" cy="9.500" r="7.500" fill="none" stroke="#c4c4c4" stroke-width="2"/><path d="M15 15L22 22" stroke="#c4c4c4" stroke-width="3.400" stroke-linecap="round"/></svg>
<span class="a t" style="left:209.0px;top:1316.5px;font-size:25px;line-height:31px;color:#d2d2d2;letter-spacing:0.16px;">All Modified</span>
<svg class="a" style="left:176px;top:1352px;" width="24" height="24" viewBox="0 0 24 24"><circle cx="9.500" cy="9.500" r="7.500" fill="none" stroke="#c4c4c4" stroke-width="2"/><path d="M15 15L22 22" stroke="#c4c4c4" stroke-width="3.400" stroke-linecap="round"/></svg>
<span class="a t" style="left:209.0px;top:1348.5px;font-size:25px;line-height:31px;color:#d2d2d2;letter-spacing:0.20px;">All Conflicts</span>
<svg class="a" style="left:176px;top:1384px;" width="24" height="24" viewBox="0 0 24 24"><circle cx="9.500" cy="9.500" r="7.500" fill="none" stroke="#c4c4c4" stroke-width="2"/><path d="M15 15L22 22" stroke="#c4c4c4" stroke-width="3.400" stroke-linecap="round"/></svg>
<span class="a t" style="left:209.0px;top:1380.5px;font-size:25px;line-height:31px;color:#d2d2d2;letter-spacing:-0.23px;">All Excluded</span>
<div class="a" style="left:112px;top:1442px;width:388px;height:32px;background:#33608c;"></div>
<svg class="a" style="left:120.0px;top:1452.0px;" width="18" height="14" viewBox="0 0 18 14"><path d="M0 0H18L9.0 14Z" fill="#4d7aa3"/></svg>
<svg class="a" style="left:148px;top:1447px;" width="28" height="22" viewBox="0 0 28 22"><path d="M1 20V2.500A1.500 1.500 0 0 1 2.500 1H8.500L11 4H20.500A1.500 1.500 0 0 1 22 5.500V8" fill="none" stroke="#d0d0d0" stroke-width="2"/><path d="M6.500 8H27.500L22.500 21H1Z" fill="#d0d0d0"/></svg>
<span class="a t" style="left:183.0px;top:1442.5px;font-size:25px;line-height:31px;color:#ffffff;letter-spacing:1.39px;-webkit-text-stroke:0.9px #ffffff;">Assets</span>
<div class="a" style="left:137px;top:1430px;width:146px;height:54px;border:4px solid #e2402c;border-radius:19px;z-index:5"></div>
<svg class="a" style="left:176px;top:1481px;" width="24" height="20" viewBox="0 0 24 20"><path d="M1.500 0H9.500L12.500 3.500H22.500A1.500 1.500 0 0 1 24 5V18.500A1.500 1.500 0 0 1 22.500 20H1.500A1.500 1.500 0 0 1 0 18.500V1.500A1.500 1.500 0 0 1 1.500 0Z" fill="#c4c4c4"/></svg>
<span class="a t" style="left:209.0px;top:1475.5px;font-size:25px;line-height:31px;color:#d2d2d2;letter-spacing:-0.08px;width:289.0px;overflow:hidden;">Scenes</span>
<svg class="a" style="left:176px;top:1513px;" width="24" height="20" viewBox="0 0 24 20"><path d="M1.500 0H9.500L12.500 3.500H22.500A1.500 1.500 0 0 1 24 5V18.500A1.500 1.500 0 0 1 22.500 20H1.500A1.500 1.500 0 0 1 0 18.500V1.500A1.500 1.500 0 0 1 1.500 0Z" fill="#c4c4c4"/></svg>
<span class="a t" style="left:209.0px;top:1507.5px;font-size:25px;line-height:31px;color:#d2d2d2;letter-spacing:0.09px;width:289.0px;overflow:hidden;">Settings</span>
<svg class="a" style="left:176px;top:1545px;" width="24" height="20" viewBox="0 0 24 20"><path d="M1.500 0H9.500L12.500 3.500H22.500A1.500 1.500 0 0 1 24 5V18.500A1.500 1.500 0 0 1 22.500 20H1.500A1.500 1.500 0 0 1 0 18.500V1.500A1.500 1.500 0 0 1 1.500 0Z" fill="#c4c4c4"/></svg>
<span class="a t" style="left:209.0px;top:1539.5px;font-size:25px;line-height:31px;color:#d2d2d2;letter-spacing:-0.02px;width:289.0px;overflow:hidden;">Tuna</span>
<svg class="a" style="left:151.5px;top:1579.5px;" width="12" height="15" viewBox="0 0 12 15"><path d="M0 0L12 7.5L0 15Z" fill="#6e6e6e"/></svg>
<svg class="a" style="left:176px;top:1577px;" width="24" height="20" viewBox="0 0 24 20"><path d="M1.500 0H9.500L12.500 3.500H22.500A1.500 1.500 0 0 1 24 5V18.500A1.500 1.500 0 0 1 22.500 20H1.500A1.500 1.500 0 0 1 0 18.500V1.500A1.500 1.500 0 0 1 1.500 0Z" fill="#c4c4c4"/></svg>
<span class="a t" style="left:209.0px;top:1571.5px;font-size:25px;line-height:31px;color:#d2d2d2;letter-spacing:0.17px;width:289.0px;overflow:hidden;">TutorialInfo</span>
<svg class="a" style="left:151.5px;top:1611.5px;" width="12" height="15" viewBox="0 0 12 15"><path d="M0 0L12 7.5L0 15Z" fill="#6e6e6e"/></svg>
<svg class="a" style="left:176px;top:1609px;" width="24" height="20" viewBox="0 0 24 20"><path d="M1.500 0H9.500L12.500 3.500H22.500A1.500 1.500 0 0 1 24 5V18.500A1.500 1.500 0 0 1 22.500 20H1.500A1.500 1.500 0 0 1 0 18.500V1.500A1.500 1.500 0 0 1 1.500 0Z" fill="#c4c4c4"/></svg>
<span class="a t" style="left:209.0px;top:1603.5px;font-size:25px;line-height:31px;color:#d2d2d2;letter-spacing:-0.33px;width:289.0px;overflow:hidden;">Unity.VisualScripting.Generated</span>
<svg class="a" style="left:151.5px;top:1643.5px;" width="12" height="15" viewBox="0 0 12 15"><path d="M0 0L12 7.5L0 15Z" fill="#6e6e6e"/></svg>
<svg class="a" style="left:176px;top:1641px;" width="24" height="20" viewBox="0 0 24 20"><path d="M1.500 0H9.500L12.500 3.500H22.500A1.500 1.500 0 0 1 24 5V18.500A1.500 1.500 0 0 1 22.500 20H1.500A1.500 1.500 0 0 1 0 18.500V1.500A1.500 1.500 0 0 1 1.500 0Z" fill="#c4c4c4"/></svg>
<span class="a t" style="left:209.0px;top:1635.5px;font-size:25px;line-height:31px;color:#d2d2d2;letter-spacing:-1.50px;width:289.0px;overflow:hidden;">XR</span>
<svg class="a" style="left:151.5px;top:1675.5px;" width="12" height="15" viewBox="0 0 12 15"><path d="M0 0L12 7.5L0 15Z" fill="#6e6e6e"/></svg>
<svg class="a" style="left:176px;top:1673px;" width="24" height="20" viewBox="0 0 24 20"><path d="M1.500 0H9.500L12.500 3.500H22.500A1.500 1.500 0 0 1 24 5V18.500A1.500 1.500 0 0 1 22.500 20H1.500A1.500 1.500 0 0 1 0 18.500V1.500A1.500 1.500 0 0 1 1.500 0Z" fill="#c4c4c4"/></svg>
<span class="a t" style="left:209.0px;top:1667.5px;font-size:25px;line-height:31px;color:#d2d2d2;letter-spacing:-1.50px;width:289.0px;overflow:hidden;">XRI</span>
<svg class="a" style="left:120.0px;top:1709.0px;" width="18" height="14" viewBox="0 0 18 14"><path d="M0 0H18L9.0 14Z" fill="#6e6e6e"/></svg>
<svg class="a" style="left:148px;top:1704px;" width="28" height="22" viewBox="0 0 28 22"><path d="M1 20V2.500A1.500 1.500 0 0 1 2.500 1H8.500L11 4H20.500A1.500 1.500 0 0 1 22 5.500V8" fill="none" stroke="#c4c4c4" stroke-width="2"/><path d="M6.500 8H27.500L22.500 21H1Z" fill="#c4c4c4"/></svg>
<span class="a t" style="left:183.0px;top:1698.5px;font-size:25px;line-height:31px;color:#dcdcdc;letter-spacing:0.60px;-webkit-text-stroke:0.9px #dcdcdc;">Packages</span>
<div class="a" style="left:112px;top:1731px;width:391px;height:32px;overflow:hidden">
<svg class="a" style="left:39.5px;top:8.5px;" width="12" height="15" viewBox="0 0 12 15"><path d="M0 0L12 7.5L0 15Z" fill="#6e6e6e"/></svg>
<svg class="a" style="left:64px;top:6px;" width="24" height="20" viewBox="0 0 24 20"><path d="M1.500 0H9.500L12.500 3.500H22.500A1.500 1.500 0 0 1 24 5V18.500A1.500 1.500 0 0 1 22.500 20H1.500A1.500 1.500 0 0 1 0 18.500V1.500A1.500 1.500 0 0 1 1.500 0Z" fill="#c4c4c4"/></svg>
<span class="a t" style="left:97.0px;top:0.5px;font-size:25px;line-height:31px;color:#d2d2d2;letter-spacing:-0.28px;">2D Sprite</span>
</div>
<div class="a" style="left:112px;top:1763px;width:391px;height:32px;overflow:hidden">
<svg class="a" style="left:39.5px;top:8.5px;" width="12" height="15" viewBox="0 0 12 15"><path d="M0 0L12 7.5L0 15Z" fill="#6e6e6e"/></svg>
<svg class="a" style="left:64px;top:6px;" width="24" height="20" viewBox="0 0 24 20"><path d="M1.500 0H9.500L12.500 3.500H22.500A1.500 1.500 0 0 1 24 5V18.500A1.500 1.500 0 0 1 22.500 20H1.500A1.500 1.500 0 0 1 0 18.500V1.500A1.500 1.500 0 0 1 1.500 0Z" fill="#c4c4c4"/></svg>
<span class="a t" style="left:97.0px;top:0.5px;font-size:25px;line-height:31px;color:#d2d2d2;letter-spacing:-0.23px;">Addressables</span>
</div>
<div class="a" style="left:112px;top:1795px;width:391px;height:32px;overflow:hidden">
<svg class="a" style="left:39.5px;top:8.5px;" width="12" height="15" viewBox="0 0 12 15"><path d="M0 0L12 7.5L0 15Z" fill="#6e6e6e"/></svg>
<svg class="a" style="left:64px;top:6px;" width="24" height="20" viewBox="0 0 24 20"><path d="M1.500 0H9.500L12.500 3.500H22.500A1.500 1.500 0 0 1 24 5V18.500A1.500 1.500 0 0 1 22.500 20H1.500A1.500 1.500 0 0 1 0 18.500V1.500A1.500 1.500 0 0 1 1.500 0Z" fill="#c4c4c4"/></svg>
<span class="a t" style="left:97.0px;top:0.5px;font-size:25px;line-height:31px;color:#d2d2d2;letter-spacing:0.02px;">AI Navigation</span>
</div>
<div class="a" style="left:112px;top:1827px;width:391px;height:19px;overflow:hidden">
<svg class="a" style="left:39.5px;top:8.5px;" width="12" height="15" viewBox="0 0 12 15"><path d="M0 0L12 7.5L0 15Z" fill="#6e6e6e"/></svg>
<svg class="a" style="left:64px;top:6px;" width="24" height="20" viewBox="0 0 24 20"><path d="M1.500 0H9.500L12.500 3.500H22.500A1.500 1.500 0 0 1 24 5V18.500A1.500 1.500 0 0 1 22.500 20H1.500A1.500 1.500 0 0 1 0 18.500V1.500A1.500 1.500 0 0 1 1.500 0Z" fill="#c4c4c4"/></svg>
<span class="a t" style="left:97.0px;top:0.5px;font-size:25px;line-height:31px;color:#d2d2d2;letter-spacing:0.06px;">Android Logcat</span>
</div>
<div class="a" style="left:528.5px;top:1251.5px;width:1801.5px;height:594.5px;background:#333333;"></div>
<div class="a" style="left:528.5px;top:1251.5px;width:1801.5px;height:42.5px;background:#3f3f3f;"></div>
<span class="a t" style="left:537.0px;top:1256.5px;font-size:25px;line-height:31px;color:#d6d6d6;letter-spacing:1.39px;-webkit-text-stroke:0.9px #d6d6d6;">Assets</span>
<div class="a" style="left:528.5px;top:1804px;width:1801.5px;height:42px;background:#3f3f3f;"></div>
<div class="a" style="left:2188px;top:1824px;width:110px;height:2.5px;background:#6e6e6e;"></div>
<div class="a" style="left:2242px;top:1815px;width:20px;height:20px;background:#b4b4b4;border-radius:10px;"></div>
<svg class="a" style="left:574px;top:1324px;" width="112" height="110" viewBox="0 0 112 110"><path d="M44 4L84 24V52M44 4L4 24V74L44 96L56 90M4 24L44 45L84 24M44 45V96" fill="none" stroke="#8ed3fb" stroke-width="8" stroke-linejoin="round" stroke-linecap="round"/><path d="M76 58H72Q66 58 66 64V74Q66 81 60 82.500Q66 84 66 91V100Q66 106 72 106H76M92 58H96Q102 58 102 64V74Q102 81 108 82.500Q102 84 102 91V100Q102 106 96 106H92" fill="none" stroke="#f0774a" stroke-width="7.500" stroke-linejoin="round"/></svg>
<svg class="a" style="left:1486px;top:1324px;" width="112" height="110" viewBox="0 0 112 110"><path d="M44 4L84 24V52M44 4L4 24V74L44 96L56 90M4 24L44 45L84 24M44 45V96" fill="none" stroke="#8ed3fb" stroke-width="8" stroke-linejoin="round" stroke-linecap="round"/><path d="M76 58H72Q66 58 66 64V74Q66 81 60 82.500Q66 84 66 91V100Q66 106 72 106H76M92 58H96Q102 58 102 64V74Q102 81 108 82.500Q102 84 102 91V100Q102 106 96 106H92" fill="none" stroke="#f0774a" stroke-width="7.500" stroke-linejoin="round"/></svg>
<svg class="a" style="left:726px;top:1338px;" width="96" height="80" viewBox="0 0 96 80"><path d="M8 0H38Q41 0 42.500 2.500L50 15.500H88A8 8 0 0 1 96 23.500V72A8 8 0 0 1 88 80H8A8 8 0 0 1 0 72V8A8 8 0 0 1 8 0Z" fill="#c4c4c4"/></svg>
<svg class="a" style="left:878px;top:1338px;" width="96" height="80" viewBox="0 0 96 80"><path d="M8 0H38Q41 0 42.500 2.500L50 15.500H88A8 8 0 0 1 96 23.500V72A8 8 0 0 1 88 80H8A8 8 0 0 1 0 72V8A8 8 0 0 1 8 0Z" fill="#c4c4c4"/></svg>
<svg class="a" style="left:1030px;top:1338px;" width="96" height="80" viewBox="0 0 96 80"><path d="M8 0H38Q41 0 42.500 2.500L50 15.500H88A8 8 0 0 1 96 23.500V72A8 8 0 0 1 88 80H8A8 8 0 0 1 0 72V8A8 8 0 0 1 8 0Z" fill="#c4c4c4"/></svg>
<svg class="a" style="left:1182px;top:1338px;" width="96" height="80" viewBox="0 0 96 80"><path d="M8 0H38Q41 0 42.500 2.500L50 15.500H88A8 8 0 0 1 96 23.500V72A8 8 0 0 1 88 80H8A8 8 0 0 1 0 72V8A8 8 0 0 1 8 0Z" fill="#c4c4c4"/></svg>
<svg class="a" style="left:1334px;top:1338px;" width="96" height="80" viewBox="0 0 96 80"><path d="M8 0H38Q41 0 42.500 2.500L50 15.500H88A8 8 0 0 1 96 23.500V72A8 8 0 0 1 88 80H8A8 8 0 0 1 0 72V8A8 8 0 0 1 8 0Z" fill="#c4c4c4"/></svg>
<svg class="a" style="left:1638px;top:1338px;" width="96" height="80" viewBox="0 0 96 80"><path d="M8 0H38Q41 0 42.500 2.500L50 15.500H88A8 8 0 0 1 96 23.500V72A8 8 0 0 1 88 80H8A8 8 0 0 1 0 72V8A8 8 0 0 1 8 0Z" fill="#c4c4c4"/></svg>
<svg class="a" style="left:1790px;top:1338px;" width="96" height="80" viewBox="0 0 96 80"><path d="M8 0H38Q41 0 42.500 2.500L50 15.500H88A8 8 0 0 1 96 23.500V72A8 8 0 0 1 88 80H8A8 8 0 0 1 0 72V8A8 8 0 0 1 8 0Z" fill="#c4c4c4"/></svg>
<span class="a t" style="left:583.5px;top:1445.5px;font-size:20px;line-height:25px;color:#d2d2d2;letter-spacing:0.28px;">Readme</span>
<span class="a t" style="left:739.0px;top:1445.5px;font-size:20px;line-height:25px;color:#d2d2d2;letter-spacing:0.66px;">Scenes</span>
<span class="a t" style="left:887.0px;top:1445.5px;font-size:20px;line-height:25px;color:#d2d2d2;letter-spacing:0.82px;">Settings</span>
<span class="a t" style="left:1055.0px;top:1445.5px;font-size:20px;line-height:25px;color:#d2d2d2;letter-spacing:0.39px;">Tuna</span>
<span class="a t" style="left:1175.5px;top:1445.5px;font-size:20px;line-height:25px;color:#d2d2d2;letter-spacing:0.88px;">TutorialInfo</span>
<span class="a t" style="left:1320.0px;top:1445.5px;font-size:20px;line-height:25px;color:#d2d2d2;letter-spacing:0.62px;">Unity.Visua...</span>
<span class="a t" style="left:1476.0px;top:1445.5px;font-size:20px;line-height:25px;color:#d2d2d2;letter-spacing:0.13px;">UniversalR...</span>
<span class="a t" style="left:1672.9px;top:1445.5px;font-size:20px;line-height:25px;color:#d2d2d2;letter-spacing:-1.50px;">XR</span>
<span class="a t" style="left:1822.8px;top:1445.5px;font-size:20px;line-height:25px;color:#d2d2d2;letter-spacing:-1.50px;">XRI</span>
</div>
</body></html>
